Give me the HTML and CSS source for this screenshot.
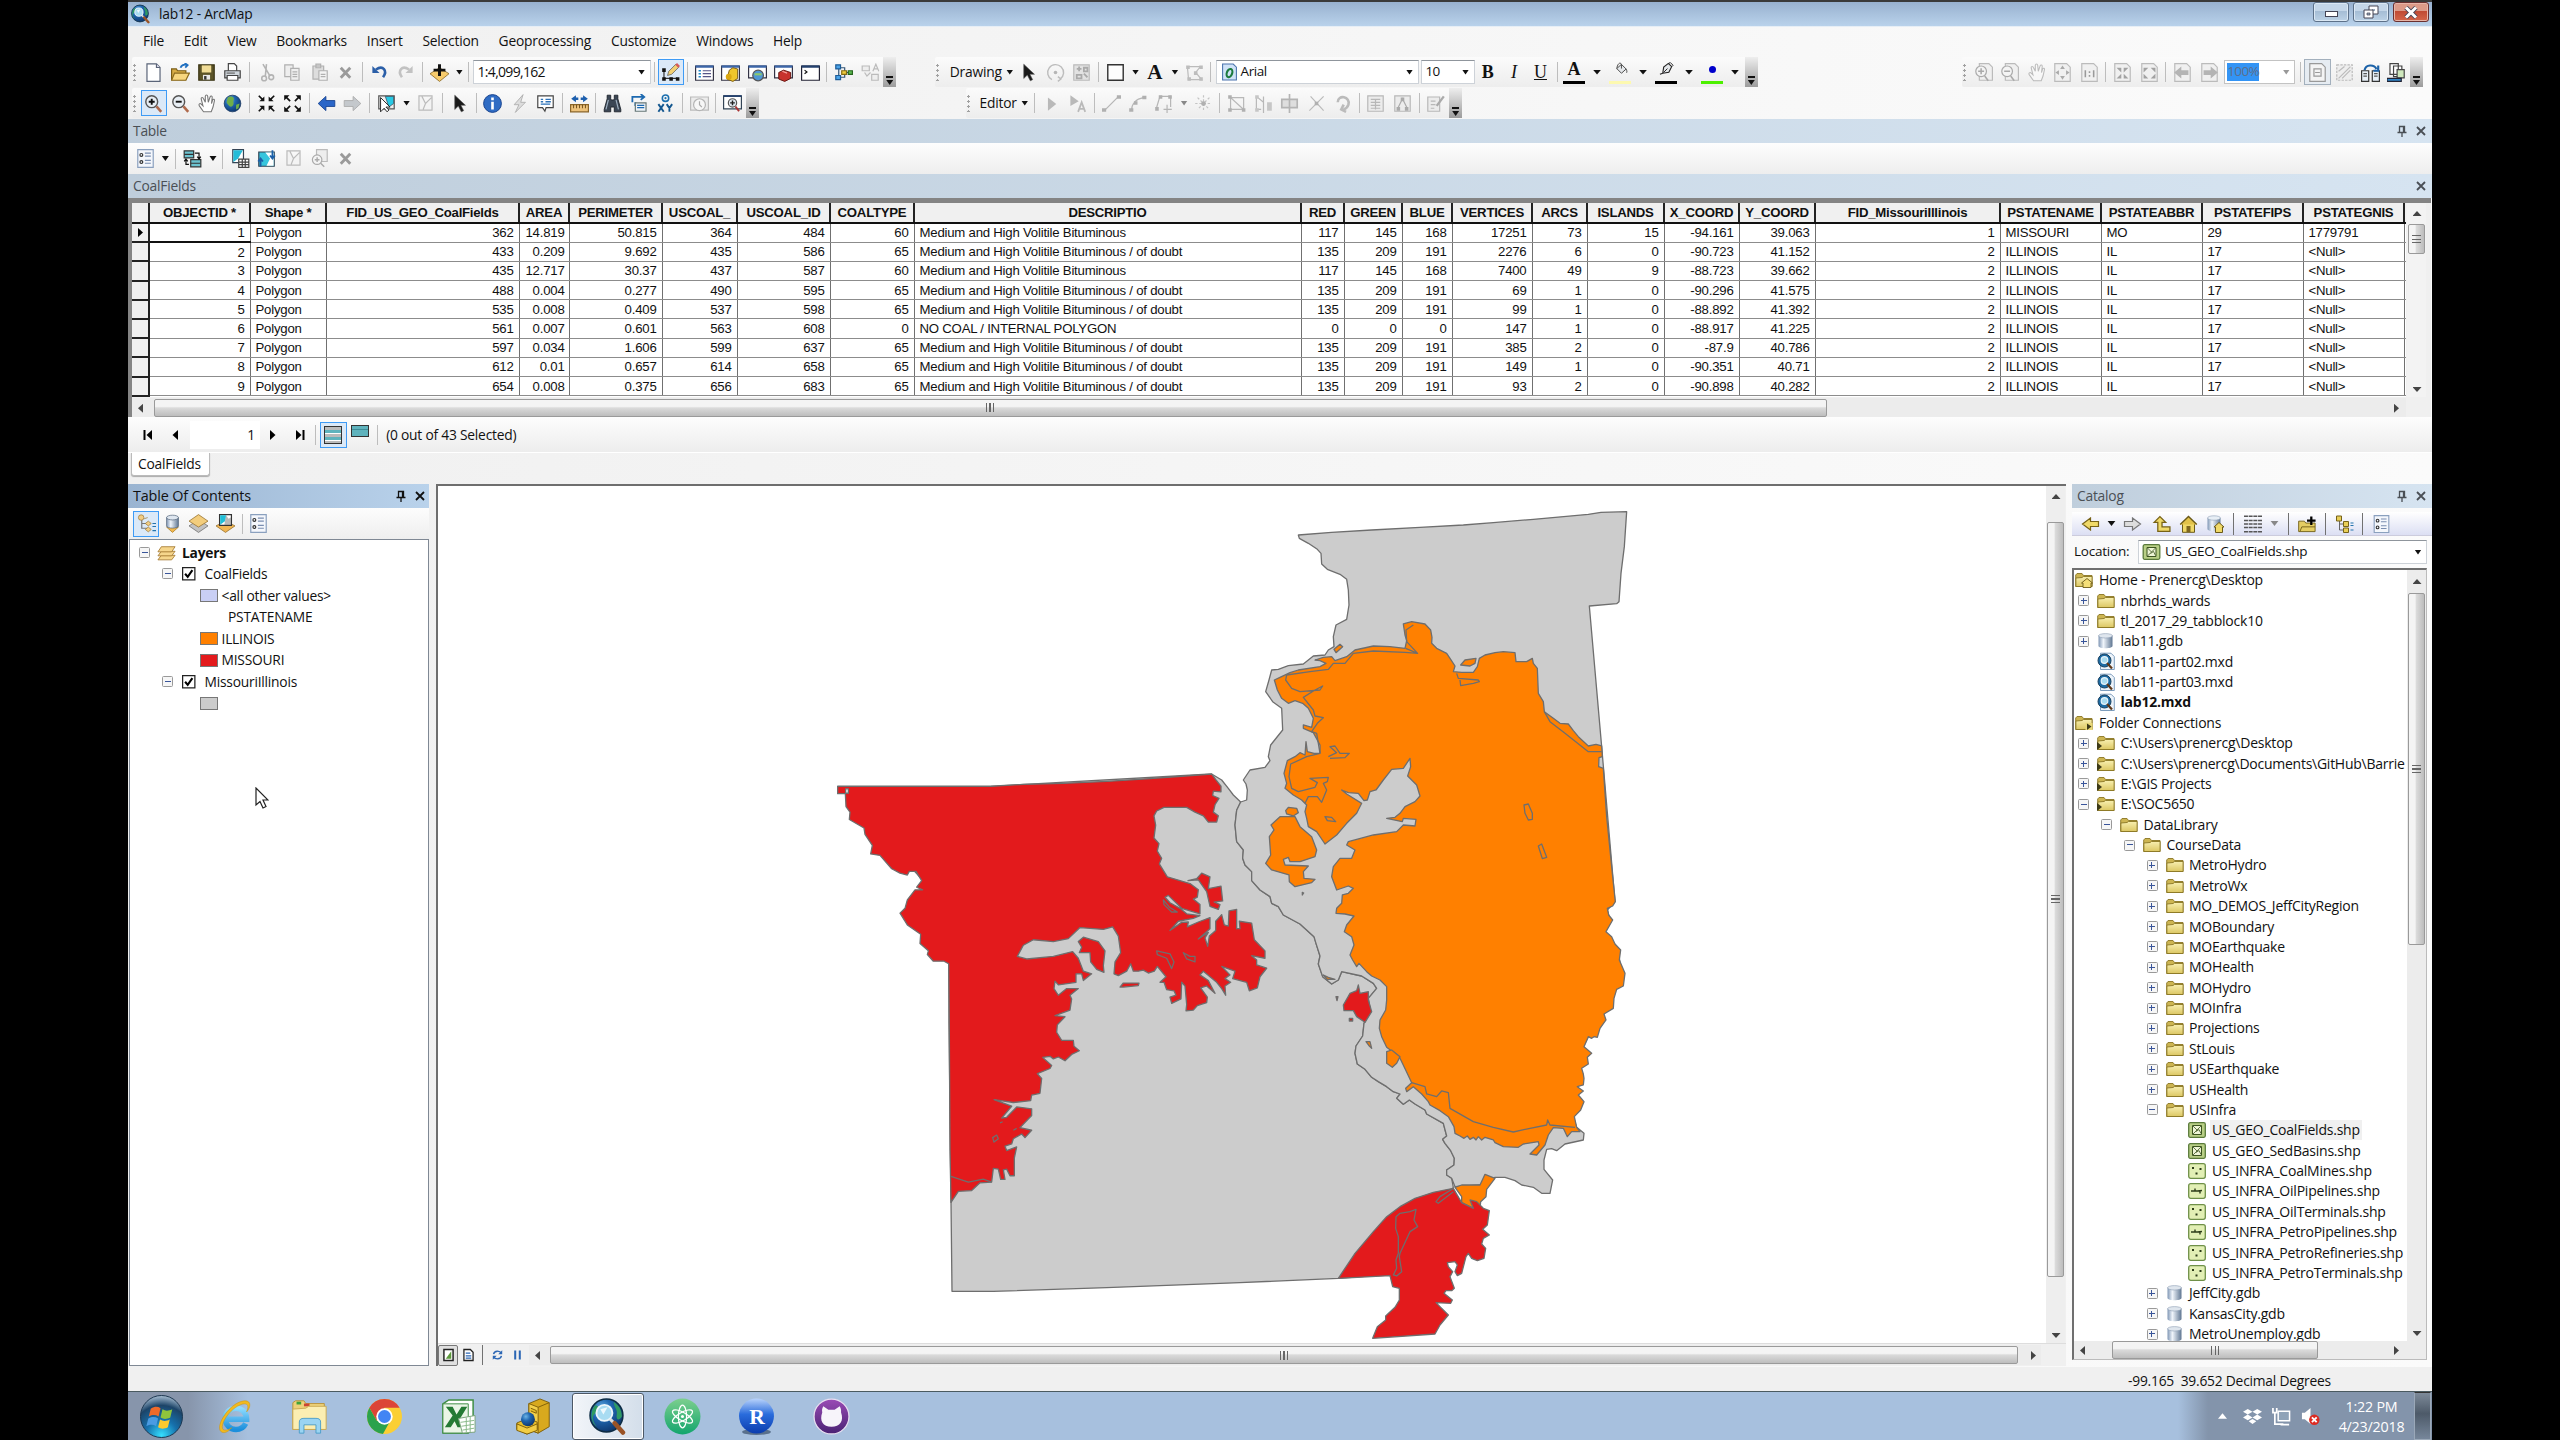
FILE: index.html
```html
<!DOCTYPE html>
<html lang="en">
<head>
<meta charset="utf-8">
<title>lab12 - ArcMap</title>
<link rel="stylesheet" href="styles.css">
</head>
<body>
<svg class="defs" width="0" height="0" aria-hidden="true">
<defs>
<linearGradient id="gFold" x1="0" y1="0" x2="0" y2="1"><stop offset="0" stop-color="#f8efb0"/><stop offset="1" stop-color="#dcc763"/></linearGradient>
<linearGradient id="gCyl" x1="0" y1="0" x2="1" y2="0"><stop offset="0" stop-color="#7f96b4"/><stop offset=".35" stop-color="#f0f5fb"/><stop offset="1" stop-color="#5f7692"/></linearGradient>
<radialGradient id="gGlobe" cx=".35" cy=".3" r=".8"><stop offset="0" stop-color="#6db4e6"/><stop offset=".4" stop-color="#1f66b0"/><stop offset="1" stop-color="#0c2f62"/></radialGradient>
<radialGradient id="gStart" cx=".5" cy=".95" r=".95"><stop offset="0" stop-color="#35e0ff"/><stop offset=".4" stop-color="#1670ac"/><stop offset=".75" stop-color="#1c4468"/><stop offset="1" stop-color="#a8bed2"/></radialGradient>
<linearGradient id="gAtom" x1="0" y1="0" x2="0" y2="1"><stop offset="0" stop-color="#7ccf8e"/><stop offset="1" stop-color="#12a56d"/></linearGradient>
<linearGradient id="gR" x1="0" y1="0" x2="0" y2="1"><stop offset="0" stop-color="#b9d3fb"/><stop offset=".45" stop-color="#2a6cdc"/><stop offset="1" stop-color="#0b3cae"/></linearGradient>
<linearGradient id="gCat" x1="0" y1="0" x2="0" y2="1"><stop offset="0" stop-color="#9a4bb5"/><stop offset="1" stop-color="#4a2274"/></linearGradient>
<linearGradient id="gIE" x1="0" y1="0" x2="0" y2="1"><stop offset="0" stop-color="#8edcff"/><stop offset="1" stop-color="#1c8fdc"/></linearGradient>
</defs>
<symbol id="new" viewBox="0 0 16 16"><path d="M2.500.8h8l3 3v11.700h-11z" fill="#fff" stroke="#5a6478"/><path d="M10.500.8v3h3" fill="#dde" stroke="#5a6478"/></symbol>
<symbol id="open" viewBox="0 0 16 16"><path d="M.5 14V5h4l1 1.500h7V14z" fill="#d8ad45" stroke="#7a5c14"/><path d="M.5 14.500L3 8.500h12.500L12.500 14.500z" fill="#f7d67e" stroke="#8a6a1c"/><path d="M8 4c1-2.500 3-3 5-2.500M11.500 0l2.500 1.800-2 2" stroke="#1f6fc0" stroke-width="1.500" fill="none"/></symbol>
<symbol id="save" viewBox="0 0 16 16"><path d="M1.500 1.500h13v13h-13z" fill="#5b5327" stroke="#3a3414"/><path d="M4 2h8v6H4z" fill="#f0dc96"/><path d="M5 10h6v4H5z" fill="#e8e8e8"/><path d="M6 11h2v3H6z" fill="#333"/></symbol>
<symbol id="print" viewBox="0 0 16 16"><path d="M4.500 7V.5h5l2 2V7" fill="#fff" stroke="#444"/><path d="M1.500 6.500h13v6h-13z" fill="#cfd6dc" stroke="#444"/><path d="M3.500 10.500h9v4h-9z" fill="#fff" stroke="#444"/><path d="M3 8.500h7" stroke="#666"/></symbol>
<symbol id="cut" viewBox="0 0 16 16"><g fill="none" stroke="#b3b3b3" stroke-width="1.300"><path d="M5 1l6 10M8 1l-1 10"/><circle cx="6" cy="13" r="2"/><circle cx="12" cy="12" r="2"/></g></symbol>
<symbol id="copy" viewBox="0 0 16 16"><g fill="#eee" stroke="#b0b0b0"><path d="M1.500 1.500h7v10h-7z"/><path d="M6.500 4.500h7v10h-7z"/><path d="M8 7.500h4M8 9.500h4M8 11.500h4"/></g></symbol>
<symbol id="paste" viewBox="0 0 16 16"><g fill="#ddd" stroke="#b0b0b0"><path d="M2.500 2.500h9v11h-9zM5 1h4v3H5z"/><path d="M7.500 6.500h7v8h-7z" fill="#f4f4f4"/><path d="M9 9.500h4M9 11.500h4"/></g></symbol>
<symbol id="xx" viewBox="0 0 16 16"><path d="M4 4l8 8.500M12 4l-8 8.500" stroke="#9a9a9a" stroke-width="2.400"/></symbol>
<symbol id="undo" viewBox="0 0 16 16"><path d="M5 5.500c6-4 10 1 6 6.500" fill="none" stroke="#2b5fa8" stroke-width="2.200"/><path d="M2 2.500v6h6z" fill="#2b5fa8"/></symbol>
<symbol id="redo" viewBox="0 0 16 16"><path d="M11 5.500c-6-4-10 1-6 6.500" fill="none" stroke="#c2c2c2" stroke-width="2.200"/><path d="M14 2.500v6H8z" fill="#c2c2c2"/></symbol>
<symbol id="add" viewBox="0 0 16 16"><path d="M0 9l8-5 8 5-8 6.500z" fill="#f6cb6c" stroke="#8a6a2c" stroke-width=".7"/><path d="M8 1v10M3 6h10" stroke="#111" stroke-width="2.500"/></symbol>
<symbol id="edtool" viewBox="0 0 16 16"><path d="M2.500 6v7h11" fill="none" stroke="#333" stroke-width="1"/><g fill="#111"><path d="M1 4.500h3v3H1zM1 12h3v3H1zM7 12h3v3H7zM12.500 12h3v3h-3z"/></g><path d="M5.500 10.500l1-3.500 6-6 2.500 2.500-6 6z" fill="#f2cf72" stroke="#555" stroke-width=".6"/><path d="M12 1.500l1.500-1.500 2.500 2.500-1.500 1.500z" fill="#d65b5b"/></symbol>
<symbol id="wToc" viewBox="0 0 16 16"><path d="M.5 2.500h15v12H.5z" fill="#fff" stroke="#334"/><path d="M.5 2h15v2H.5z" fill="#3c66a8"/><path d="M3 6.500h2M3 9h2M3 11.500h2" stroke="#1f86c8" stroke-width="1.300"/><path d="M6.500 6.500h7M6.500 9h7M6.500 11.500h7" stroke="#558"/></symbol>
<symbol id="wCat" viewBox="0 0 16 16"><path d="M.5 2.500h15v12H.5z" fill="#fff" stroke="#334"/><path d="M.5 2h15v2H.5z" fill="#3c66a8"/><path d="M7 6l3-2 4 1v8l-4 2.500-5-2z" fill="#f0c62c" stroke="#7a5c14" stroke-width=".8"/><circle cx="6.500" cy="11.500" r="2.500" fill="#dba711"/></symbol>
<symbol id="wSea" viewBox="0 0 16 16"><path d="M.5 2.500h15v10H.5z" fill="#fff" stroke="#334"/><path d="M.5 2h15v2H.5z" fill="#3c66a8"/><circle cx="8.500" cy="10.500" r="4.500" fill="#4f97d4" stroke="#555"/><path d="M5.500 9.500h6" stroke="#8cc96b" stroke-width="1.800"/></symbol>
<symbol id="wBox" viewBox="0 0 16 16"><path d="M.5 2.500h15v10H.5z" fill="#fff" stroke="#334"/><path d="M.5 2h15v2H.5z" fill="#3c66a8"/><path d="M4 8l4-2 6 2v5l-5 2.500-5-2z" fill="#c8322c" stroke="#64140f" stroke-width=".8"/><path d="M7 7l4 1.500" stroke="#f6a19c"/></symbol>
<symbol id="wPy" viewBox="0 0 16 16"><path d="M.5 2.500h15v12H.5z" fill="#fff" stroke="#223"/><path d="M.5 2h15v2H.5z" fill="#24416e"/><path d="M3 6l2 1.500-2 1.500" stroke="#111" fill="none"/></symbol>
<symbol id="mb" viewBox="0 0 16 16"><path d="M4 4v8M4 4h5v4M4 12h5V8h5" stroke="#357" fill="none"/><path d="M1.500 1.500h4v3.500h-4zM1.500 10.500h4v3.500h-4z" fill="#4aa3e8" stroke="#1d5b96"/><path d="M6.500 6.500h4v3h-4z" fill="#f2cd3f" stroke="#846b10"/><path d="M12 6.500h3.500v3H12z" fill="#5bb94f" stroke="#27651e"/></symbol>
<symbol id="mbg" viewBox="0 0 16 16"><g fill="#eee" stroke="#bbb"><path d="M1 2.500h6v4H1zM9 9.500h5.500v5H9zM3 8l2 3 3-3"/></g><path d="M10 7l2.500-6L15 7M11 5h3" stroke="#bbb" fill="none"/></symbol>
<symbol id="zin" viewBox="0 0 16 16"><circle cx="6.500" cy="6.500" r="5" fill="#e8eef4" stroke="#555" stroke-width="1.200"/><path d="M6.500 4v5M4 6.500h5" stroke="#111" stroke-width="1.600"/><path d="M10.500 10.500l4 4.500" stroke="#b06a4c" stroke-width="2.200"/></symbol>
<symbol id="zout" viewBox="0 0 16 16"><circle cx="6.500" cy="6.500" r="5" fill="#e8eef4" stroke="#555" stroke-width="1.200"/><path d="M4 6.500h5" stroke="#111" stroke-width="1.600"/><path d="M10.500 10.500l4 4.500" stroke="#b06a4c" stroke-width="2.200"/></symbol>
<symbol id="hand" viewBox="0 0 16 16"><path d="M5.500 15L2 10c-1-1.500.5-2.500 1.500-1.500L5 10 3.500 4c0-1.500 1.500-1.500 2 0L7 7V2c.2-1.500 1.800-1.500 2 0l.5 5L11 2.500c.5-1.200 2-1 1.800.5L12.200 8l1-3c.5-1 1.800-.5 1.500.5L13.500 11 12 15z" fill="#fff" stroke="#777" stroke-width=".9"/></symbol>
<symbol id="globe" viewBox="0 0 16 16"><circle cx="8" cy="8" r="7" fill="url(#gGlobe)" stroke="#1d3c66" stroke-width=".7"/><path d="M4 3c3-2 6 0 5 2s1 3-1 5-4-1-5-3zM11 9l3-1-1 4-2 1z" fill="#6fae4a"/></symbol>
<symbol id="fin" viewBox="0 0 16 16"><g fill="#111" stroke="#111" stroke-width="1.400"><path d="M1.500 1.500L5 5M14.500 1.500L11 5M1.500 14.500L5 11M14.500 14.500L11 11"/><path d="M6.200 2v4.200H2zM9.800 2v4.200H14zM6.200 14V9.800H2zM9.800 14V9.800H14z" stroke="none"/></g></symbol>
<symbol id="fout" viewBox="0 0 16 16"><g fill="#111" stroke="#111" stroke-width="1.400"><path d="M2 2l4 4M14 2l-4 4M2 14l4-4M14 14l-4-4"/><path d="M1 1h4.500L1 5.500zM15 1h-4.500L15 5.500zM1 15h4.500L1 10.500zM15 15h-4.500L15 10.500z" stroke="none"/></g></symbol>
<symbol id="back" viewBox="0 0 16 16"><path d="M1 8l6.500-6v3.500H15v5H7.500V14z" fill="#2a66c8" stroke="#123f8c" stroke-width=".7"/></symbol>
<symbol id="fwd" viewBox="0 0 16 16"><path d="M15 8L8.500 2v3.500H1v5h7.500V14z" fill="#c4c8cc" stroke="#a8a8a8" stroke-width=".7"/></symbol>
<symbol id="sel" viewBox="0 0 16 16"><path d="M1.500 1.500h13v11h-13z" fill="#eee" stroke="#555"/><path d="M7 2h7v6l-4 3z" fill="#27c9e4" stroke="#345" stroke-width=".6"/><path d="M3 3v12l3-3 2.500 3 1.500-1.500L7.500 11H11z" fill="#fff" stroke="#222" stroke-width=".8"/></symbol>
<symbol id="clr" viewBox="0 0 16 16"><path d="M2.500 1.500h11v12h-11zM5 2l3 6 5-5M8 8l-2 5" fill="#f3f3f3" stroke="#bbb"/></symbol>
<symbol id="arr" viewBox="0 0 16 16"><path d="M4 1v12l3-2.800L9.500 15l2-1-2.300-4.500H13z" fill="#1a1a1a" stroke="#555" stroke-width=".5"/></symbol>
<symbol id="info" viewBox="0 0 16 16"><circle cx="8" cy="8" r="7.500" fill="#2f6cc4" stroke="#15408c" stroke-width=".8"/><path d="M8 3v2.200M8 6.500V13" stroke="#fff" stroke-width="2.200"/></symbol>
<symbol id="bolt" viewBox="0 0 16 16"><path d="M11 .5L3.500 9h4l-3 6.500L13 7H9z" fill="#ddd" stroke="#aaa" stroke-width=".7"/></symbol>
<symbol id="html" viewBox="0 0 16 16"><path d="M1.500 1.500h13v10h-6l-1 3-2-3h-4z" fill="#fff" stroke="#444"/><path d="M4 4.500h2M8 4.500h4.500M4 6.500h2M8 6.500h4.500M4 8.500h8" stroke="#2d72b8" stroke-width="1.200"/></symbol>
<symbol id="meas" viewBox="0 0 16 16"><path d="M.5 9h15v6H.5z" fill="#edc27b" stroke="#8a6528"/><path d="M3 9v3M5.500 9v3M8 9v3M10.500 9v3M13 9v3" stroke="#6e4d18" stroke-width=".8"/><path d="M1 4l4-3v2h2v2H5v2zM15 4l-4-3v2H9v2h2v2z" fill="#1d5fae"/></symbol>
<symbol id="bino" viewBox="0 0 16 16"><path d="M3.500 1h3v3l.5 1h2l.5-1V1h3v3L15 13v2H9.500v-4h-3v4H1v-2L3.500 4z" fill="#3b4654" stroke="#161c24" stroke-width=".7"/><path d="M4.500 5l-2 8M11 5l2 8" stroke="#9fb0c0"/></symbol>
<symbol id="route" viewBox="0 0 16 16"><path d="M2 7V2.500h9M9 0l3 2.500L9 5M4.500 10V7" fill="none" stroke="#1d69b0" stroke-width="1.500"/><path d="M4.500 7.500h9v7h-9z" fill="#eef3f8" stroke="#677"/><path d="M6 9.500h6M6 11.500h6" stroke="#1d69b0"/></symbol>
<symbol id="xy" viewBox="0 0 16 16"><circle cx="8" cy="3.500" r="2.700" fill="none" stroke="#1b6fae" stroke-width="1.300"/><circle cx="8" cy="3.500" r=".9" fill="#1b6fae"/><path d="M2 8.500l4.500 6.500M6.500 8.500L2 15M9 8.500l2.300 3.300L13.600 8.500M11.300 11.500V15" stroke="#14578f" stroke-width="1.600" fill="none"/></symbol>
<symbol id="time" viewBox="0 0 16 16"><path d="M.5 2.500h15v11H.5z" fill="#ececec" stroke="#bbb"/><circle cx="8" cy="9" r="5" fill="#f7f7f7" stroke="#b4b4b4"/><path d="M8 6v3l2 2" stroke="#aaa" fill="none"/></symbol>
<symbol id="view" viewBox="0 0 16 16"><path d="M.5 1.500h15v11H.5z" fill="#fff" stroke="#345"/><path d="M.5 1h15v1.500H.5z" fill="#24416e"/><circle cx="8" cy="7.500" r="3.500" fill="#dfe8f0" stroke="#555"/><path d="M8 5.500v4M6 7.500h4" stroke="#222" stroke-width="1.200"/><path d="M10.500 10.500l3 4" stroke="#a33" stroke-width="1.600"/></symbol>
<symbol id="rot" viewBox="0 0 16 16"><path d="M5 14A6.700 6.700 0 1 1 12 13.500M10 11.500l2.500 2-2.500 2" fill="none" stroke="#bcbcbc" stroke-width="1.200"/><circle cx="8" cy="8" r="1.500" fill="#b5b5b5"/></symbol>
<symbol id="gz" viewBox="0 0 16 16"><path d="M1.500 1.500h13v13h-13z" fill="#e2e2e2" stroke="#bbb"/><path d="M4 5h4M6 3v4M10 4h3v3h-3zM10 9l3 3M4 10h4v3H4z" stroke="#aaa" fill="none" stroke-width="1.500"/></symbol>
<symbol id="rect" viewBox="0 0 16 16"><path d="M1.500 1.500h13v13h-13z" fill="#fdfdfd" stroke="#333" stroke-width="1.200"/></symbol>
<symbol id="ev" viewBox="0 0 16 16"><path d="M2 3h11l-4 5 5 6H3z" fill="none" stroke="#bbb"/><path d="M1 2h3v3H1zM12 2h3v3h-3zM7.500 7h3v3h-3zM12 12h3v3h-3zM2 12h3v3H2z" fill="#bdbdbd"/></symbol>
<symbol id="truetype" viewBox="0 0 16 16"><path d="M1.500.5h10l3 3v12h-13z" fill="#cfe2f7" stroke="#4a73ad"/><ellipse cx="8" cy="9" rx="2.500" ry="4" transform="rotate(20 8 9)" fill="none" stroke="#1c7a3e" stroke-width="2"/></symbol>
<symbol id="fill" viewBox="0 0 16 16"><path d="M4 7l5-4.500 5 5L9 12z" fill="#e4e7ea" stroke="#444"/><path d="M4 7c1-6 4-7 5-4.500V7M14 7.500c1 2 1 3 .5 4" fill="none" stroke="#444"/></symbol>
<symbol id="pen" viewBox="0 0 16 16"><path d="M1 13l3-1 6.500-1 3-6L10 1.500l-5 4L4 12" fill="#e4e7ea" stroke="#222" stroke-width="1.200"/><path d="M5 11l4-4M10.500 1.500l1.500-1 3 3-1.500 1.500" stroke="#222" fill="none"/></symbol>
<symbol id="e1" viewBox="0 0 16 16"><path d="M5 3v11l7-5.500z" fill="#b9b9b9"/></symbol>
<symbol id="e2" viewBox="0 0 16 16"><path d="M2 1v9l7-4z" fill="#b9b9b9"/><path d="M8.500 15L11.500 7l3 8M9.500 12.500h4" stroke="#b9b9b9" fill="none" stroke-width="1.500"/></symbol>
<symbol id="e3" viewBox="0 0 16 16"><path d="M2 14L14 2" stroke="#b5b5b5"/><path d="M0 12h3.500v3H0zM12.500 1H16v3h-3.500z" fill="#b0b0b0"/></symbol>
<symbol id="e4" viewBox="0 0 16 16"><path d="M3 14c0-6 4-10 10-11" stroke="#b5b5b5" fill="none"/><path d="M1 12h3.500v3H1zM5 6h3v3H5zM12 1.500h3.500v3H12z" fill="#b0b0b0"/></symbol>
<symbol id="e5" viewBox="0 0 16 16"><path d="M2 12L5 2h9v9M8 13h7M11 9v7" stroke="#b5b5b5" fill="none"/><path d="M1 11h3v3H1zM4 1h3v3H4zM12 1h3v3h-3z" fill="#b0b0b0"/></symbol>
<symbol id="e6" viewBox="0 0 16 16"><path d="M8 1v14M1 8h14M3 3l10 10M13 3L3 13" stroke="#c4c4c4" stroke-dasharray="2 1.500"/><circle cx="8" cy="8" r="2" fill="#b0b0b0"/></symbol>
<symbol id="e7" viewBox="0 0 16 16"><path d="M3 13V3l11 10zM3 3h11v10" stroke="#b8b8b8" fill="none"/><path d="M1 1h3v3H1zM1 12h3v3H1zM12.500 12h3v3h-3z" fill="#b0b0b0"/></symbol>
<symbol id="e8" viewBox="0 0 16 16"><path d="M8 2v14M2 2l6 5M2 2v11h4" stroke="#b8b8b8" fill="none"/><path d="M1 1h3v3H1zM1 12h3v3H1zM11 7h4v7h-4z" fill="#c6c6c6"/></symbol>
<symbol id="e9" viewBox="0 0 16 16"><path d="M1.500 4.500h13v7h-13zM8 0v16" stroke="#b4b4b4" fill="#dedede" stroke-width="1.400"/></symbol>
<symbol id="e10" viewBox="0 0 16 16"><path d="M2 14L14 2M3 2l11 12" stroke="#bababa"/><path d="M6.500 6.500h3v3h-3z" fill="#b0b0b0"/></symbol>
<symbol id="e11" viewBox="0 0 16 16"><path d="M4 7c0-7 11-5 9 2-1 3-4 4-4 4M11 15l-4-2 2-4" stroke="#bbb" fill="none" stroke-width="2.200"/></symbol>
<symbol id="e12" viewBox="0 0 16 16"><path d="M1.500 1.500h13v13h-13zM4 4.500h8M4 7h8M4 9.500h8M4 12h8M8 4v9" stroke="#b8b8b8" fill="#ececec"/></symbol>
<symbol id="e13" viewBox="0 0 16 16"><path d="M1.500 1.500h13v13h-13z" stroke="#b8b8b8" fill="#ececec"/><path d="M4 12l4-8 4 8" stroke="#aaa" fill="none"/><path d="M3 11h3v3H3zM10 11h3v3h-3zM6.500 3h3v3h-3z" fill="#aaa"/></symbol>
<symbol id="e14" viewBox="0 0 16 16"><path d="M1.500 2.500h10v12h-10zM4 6h4M4 9h4M4 12h3" stroke="#b8b8b8" fill="#ececec"/><path d="M9 10l6-8" stroke="#aaa" stroke-width="2"/></symbol>
<symbol id="pgz" viewBox="0 0 16 16"><path d="M4.500.5h8l3 3v11h-11z" fill="#f0f0f0" stroke="#bbb"/><circle cx="6" cy="7" r="4.500" fill="#f4f4f4" stroke="#aaa"/><path d="M6 4.500v5M3.500 7h5M9 11l3 4" stroke="#aaa" stroke-width="1.300"/></symbol>
<symbol id="pgo" viewBox="0 0 16 16"><path d="M4.500.5h8l3 3v11h-11z" fill="#f0f0f0" stroke="#bbb"/><circle cx="6" cy="7" r="4.500" fill="#f4f4f4" stroke="#aaa"/><path d="M3.500 7h5M9 11l3 4" stroke="#aaa" stroke-width="1.300"/></symbol>
<symbol id="pg4" viewBox="0 0 16 16"><path d="M1.500.5h10l3 3v12h-13z" fill="#f0f0f0" stroke="#bbb"/><path d="M8 2l2 3H6zM8 14l2-3H6zM2 8l3-2v4zM14 8l-3-2v4z" fill="#aaa"/></symbol>
<symbol id="pg1" viewBox="0 0 16 16"><path d="M1.500.5h10l3 3v12h-13z" fill="#f0f0f0" stroke="#bbb"/><path d="M4.500 6v6M11.500 6v6M8 7v1.500M8 10v1.500" stroke="#999" stroke-width="1.300"/></symbol>
<symbol id="pgi" viewBox="0 0 16 16"><path d="M1.500.5h10l3 3v12h-13z" fill="#f0f0f0" stroke="#bbb"/><path d="M3 4h4v4zM13 4H9v4zM3 13h4V9zM13 13H9V9z" fill="#a2a2a2"/></symbol>
<symbol id="pgu" viewBox="0 0 16 16"><path d="M1.500.5h10l3 3v12h-13z" fill="#f0f0f0" stroke="#bbb"/><path d="M3 4v4l4-4zM13 4v4L9 4zM3 13V9l4 4zM13 13V9l-4 4z" fill="#a2a2a2"/></symbol>
<symbol id="pgl" viewBox="0 0 16 16"><path d="M1.500.5h10l3 3v12h-13z" fill="#f0f0f0" stroke="#bbb"/><path d="M1 8l6-5v3h6v4H7v3z" fill="#b4b4b4"/></symbol>
<symbol id="pgr" viewBox="0 0 16 16"><path d="M1.500.5h10l3 3v12h-13z" fill="#f0f0f0" stroke="#bbb"/><path d="M15 8L9 3v3H3v4h6v3z" fill="#b4b4b4"/></symbol>
<symbol id="pgd" viewBox="0 0 16 16"><path d="M1.500.5h10l3 3v12h-13z" fill="#f4f4f4" stroke="#999"/><path d="M5 5h6v6H5zM6 8h4" stroke="#999" fill="none"/></symbol>
<symbol id="pgx" viewBox="0 0 16 16"><path d="M1.500 1.500h13v13h-13z" fill="#eee" stroke="#bbb" stroke-dasharray="2 1"/><path d="M3 13L13 3M3 7l5-4M6 13l7-7" stroke="#bbb"/></symbol>
<symbol id="ddp" viewBox="0 0 16 16"><path d="M.5 6.500h6v9h-6zM9.500 6.500h6v9h-6z" fill="#e7f0f8" stroke="#333"/><path d="M3 6c1-5 8-5 10-1M14.500 2v4.500h-4" fill="none" stroke="#1c62a8" stroke-width="1.800"/><path d="M2 9h3M2 11h3M11 9h3M11 11h3" stroke="#555"/></symbol>
<symbol id="ddq" viewBox="0 0 16 16"><path d="M2.500.5h7v9h-7zM5.500 2.500h7v9h-7z" fill="#fff" stroke="#444"/><path d="M8.500 5.500h6v7h-6z" fill="#cfe8bd" stroke="#444"/><path d="M0 13h12v2.500H0z" fill="#2f86c8" stroke="#223"/></symbol>
<symbol id="opt" viewBox="0 0 16 16"><path d="M1.500.5h13v15h-13z" fill="#f4f7fc" stroke="#8aa0be"/><circle cx="4.500" cy="5" r="1.200" fill="none" stroke="#333"/><circle cx="4.500" cy="11" r="1.200" fill="none" stroke="#333"/><path d="M7.500 3.500h5M7.500 6h5M7.500 9.500h5M7.500 12h5" stroke="#7a8eb0"/></symbol>
<symbol id="rel" viewBox="0 0 16 16"><path d="M1 1.500h8v6H1zM6.500 9h8.500v6H6.500z" fill="#6cc3d0" stroke="#333"/><path d="M1 4.500h8M6.500 12h8" stroke="#333"/><path d="M10 3.500h3.500V8M5 13H2.500V9M12 6.500l1.500 2 1.500-2M1 10.500L2.500 8.500 4 10.500" fill="none" stroke="#111"/></symbol>
<symbol id="tsel" viewBox="0 0 16 16"><path d="M1.500.5h9v11h-9z" fill="#fff" stroke="#345"/><path d="M2 1h8L6 8l-4 3z" fill="#25bcd8"/><path d="M6.500 8.500h8.500v7H6.500zM6.500 11h8.500M6.500 13.200h8.500M9.500 8.500v7M12 8.500v7" fill="#fff" stroke="#444"/></symbol>
<symbol id="tsw" viewBox="0 0 16 16"><path d="M1.500 2.500h13v12h-13z" fill="#37c5dd" stroke="#345"/><path d="M7 3l4 5-3 6h6V3z" fill="#fff"/><path d="M3 15V8M1 10.500L3 8l2 2.500M13 1v7M11 5.500L13 8l2-2.500" fill="none" stroke="#1c5fa8" stroke-width="1.500"/></symbol>
<symbol id="tz" viewBox="0 0 16 16"><path d="M5.500.5h9v10h-9z" fill="#eee" stroke="#bbb"/><circle cx="6" cy="9" r="4" fill="#f4f4f4" stroke="#aaa"/><path d="M6 7v4M4 9h4M9 12l3 3" stroke="#aaa" stroke-width="1.200"/></symbol>
<symbol id="pin" viewBox="0 0 12 12"><path d="M3.500 7V1.500h5V7M7.500 1.500V7M1.500 7.500h9M6 8v4" fill="none" stroke="currentColor" stroke-width="1.300"/></symbol>
<symbol id="cls" viewBox="0 0 12 12"><path d="M2 2l8 8M10 2l-8 8" stroke="currentColor" stroke-width="1.800"/></symbol>
<symbol id="t1" viewBox="0 0 16 16"><path d="M4 5v7h5M4 8h5" stroke="#777" fill="none"/><circle cx="3.500" cy="3" r="2.300" fill="#f2cd84" stroke="#9b7634" stroke-width=".6"/><path d="M6 4l3-1M7 8l2.500-2 2.500 2-2.500 2zM7 13l2.500-2 2.500 2-2.500 2z" fill="#f2cd84" stroke="#9b7634" stroke-width=".6"/><path d="M13 8h3M13 10.500h3M13 14h3" stroke="#2374ae"/></symbol>
<symbol id="t2" viewBox="0 0 16 16"><path d="M3 11h10l-5 4.500z" fill="#f2b84e" stroke="#a8791f" stroke-width=".6"/><path d="M3 3v7c0 2.500 10 2.500 10 0V3z" fill="url(#gCyl)" stroke="#56677c" stroke-width=".6"/><ellipse cx="8" cy="3" rx="5" ry="2" fill="#dfe7f0" stroke="#56677c" stroke-width=".6"/></symbol>
<symbol id="t3" viewBox="0 0 16 16"><path d="M0 10l8-5 8 5-8 5.500z" fill="#c2c2c2" stroke="#777" stroke-width=".7"/><path d="M0 6l8-5.500L16 6l-8 5z" fill="#f3cd7c" stroke="#9b7634" stroke-width=".7"/></symbol>
<symbol id="t4" viewBox="0 0 16 16"><path d="M0 10l8-4 8 4-8 5.500z" fill="#f0b654" stroke="#9b7634" stroke-width=".7"/><path d="M3 .5h10v9H3z" fill="#fff" stroke="#333"/><path d="M3.500 1h5l-1 5-4 3z" fill="#1fbfd8"/><path d="M8.500 1l2 3 2-1v6H7z" fill="#333" opacity=".35"/></symbol>
<symbol id="lyr" viewBox="0 0 16 14"><g fill="#f6d68c" stroke="#a07428" stroke-width=".7"><path d="M.5 13l3-4h12l-3 4z"/><path d="M.5 9.500l3-4h12l-3 4z"/><path d="M.5 6l3-4.500h12l-3 4.500z"/></g></symbol>
<symbol id="fold" viewBox="0 0 18 15"><path d="M.7 14V2.500L2 1h5l1.500 2H17v11z" fill="#cdb552" stroke="#8a7624" stroke-width=".9"/><path d="M.9 14V5.500L7 5l1.500-1h8.600v10z" fill="url(#gFold)" stroke="#8a7624" stroke-width=".9"/></symbol>
<symbol id="fcon" viewBox="0 0 18 15"><use href="#fold"/><path d="M0 6.500l5 4-5 4z" fill="#3d3a18"/></symbol>
<symbol id="fhome" viewBox="0 0 18 15"><use href="#fold"/><path d="M6.500 10.500L12 6l5.500 4.500H16V15H8v-4.500z" fill="#f5df78" stroke="#6b5a18" stroke-width=".9"/></symbol>
<symbol id="fconn" viewBox="0 0 18 15"><use href="#fold"/><path d="M10.500 7.500h7v7h-7z" fill="#e8d87a"/><path d="M12 8l4.500 3-4.500 3.500z" fill="#3d3a18"/></symbol>
<symbol id="gdb" viewBox="0 0 18 16"><path d="M1.500 2.500v10.500c0 3 14 3 14 0V2.500z" fill="url(#gCyl)"/><ellipse cx="8.500" cy="2.800" rx="7" ry="2.200" fill="#dfe6ee" stroke="#8ea0b5" stroke-width=".6"/></symbol>
<symbol id="mxd" viewBox="0 0 18 18"><path d="M3.500.7h10.500l3.300 3.300v13H3.500z" fill="#eef4fa" stroke="#7d9dbd"/><circle cx="7.500" cy="8" r="6.500" fill="#1c6aa3" stroke="#17405f"/><circle cx="7.500" cy="7.500" r="3.300" fill="#a9dcf0" stroke="#e8f4fa" stroke-width="1.200"/><path d="M10 10.500l5 5.500" stroke="#5f3a1c" stroke-width="2.200"/></symbol>
<symbol id="spoly" viewBox="0 0 18 16"><rect x=".7" y=".7" width="16.600" height="14.600" rx="1.500" fill="#b9cf86" stroke="#5a7a3a" stroke-width="1.300"/><path d="M4.500 3.500h9v9h-9z" fill="#eef5d6" stroke="#3c5420"/><path d="M5 4l4 4 4-4M9 8l-4 4M8 9.500l3-2 2 4" stroke="#3c5420" stroke-width=".8" fill="none"/></symbol>
<symbol id="spt" viewBox="0 0 18 16"><rect x=".7" y=".7" width="16.600" height="14.600" rx="2" fill="#e2efb4" stroke="#6f9048" stroke-width="1.300"/><path d="M4 4h2v2H4zM11.500 5h2v2h-2zM7.500 9.500h2v2h-2z" fill="#2c3c18"/></symbol>
<symbol id="sln" viewBox="0 0 18 16"><rect x=".7" y=".7" width="16.600" height="14.600" rx="2" fill="#e2efb4" stroke="#6f9048" stroke-width="1.300"/><path d="M3 8h6.500l4.500-.5M7 5.500V8M12 7.500v3" stroke="#2c3c18" stroke-width="1.400" fill="none"/></symbol>
<symbol id="cb" viewBox="0 0 18 14"><path d="M1 7l8-6v3.500h8v5H9V13z" fill="#f0d968" stroke="#776215" stroke-width="1.200"/></symbol>
<symbol id="cf" viewBox="0 0 18 14"><path d="M17 7L9 1v3.500H1v5h8V13z" fill="#ddd" stroke="#777" stroke-width="1.200"/></symbol>
<symbol id="cu" viewBox="0 0 18 16"><path d="M2 6.500L7.500 1 13 6.500H9.500v4.300H17V15H5.500V6.500z" fill="#f0d968" stroke="#776215" stroke-width="1.200"/></symbol>
<symbol id="ch" viewBox="0 0 18 18"><path d="M3 9v8.300h12V9" fill="#f0d968" stroke="#6b5a18"/><path d="M.7 9.500L9 1.500l8.300 8" fill="#e2c24a" stroke="#6b5a18" stroke-width="1.400"/><path d="M7 11h4v6H7z" fill="#7d651c"/></symbol>
<symbol id="cg" viewBox="0 0 18 18"><path d="M1 3v11c0 3 13 3 13 0V3z" fill="url(#gCyl)"/><ellipse cx="7.500" cy="3" rx="6.500" ry="2.200" fill="#e7eef5" stroke="#8ea0b5" stroke-width=".6"/><path d="M7.500 12L12.500 7.500 17.500 12H16v5.500H9V12z" fill="#f0d968" stroke="#6b5a18"/></symbol>
<symbol id="cgrid" viewBox="0 0 20 20"><path d="M0 1.500h20M0 6h20M0 10h20M0 14h20M0 18.500h20" stroke="#555" stroke-width="1.700" stroke-dasharray="4.400 .8"/></symbol>
<symbol id="cfc" viewBox="0 0 20 18"><path d="M.7 17V6h6l1.500 2H18v9z" fill="#e4cd63" stroke="#76631a"/><path d="M2 17l2-5h14" fill="none" stroke="#76631a"/><path d="M14 1v9M9.500 5.500h9" stroke="#000" stroke-width="2.400"/></symbol>
<symbol id="ctree" viewBox="0 0 18 18"><path d="M4 5v10h5M4 9h5" stroke="#666" fill="none"/><path d="M1 1h5v5H1zM8 6.500h5v5H8zM8 13h5v4.500H8z" fill="#e9cf58" stroke="#76631a"/><path d="M15 8h3M15 10.500h3M15 15h3" stroke="#2374ae" stroke-width="1.200"/></symbol>
<symbol id="arcmap" viewBox="0 0 36 36"><circle cx="17" cy="17" r="16" fill="url(#gGlobe)" stroke="#0d2c44" stroke-width="1.500"/><path d="M6 7c4 0 4 5 0 8s-2 9 2 13c-6-3-8-14-2-21zM24 4c5 3 8 8 8 14-3 5-6 3-5-2s-3-7-3-12z" fill="#2f9a63"/><circle cx="15" cy="14.500" r="7.800" fill="#a9dcf2" stroke="#eef6fa" stroke-width="1.800"/><path d="M11 11l7-2-4 7z" fill="#fff" opacity=".8"/><path d="M20.500 20.500l4 4" stroke="#ddd" stroke-width="3"/><path d="M25 24.500l8 9" stroke="#9a5326" stroke-width="4.500" stroke-linecap="round"/></symbol>
</svg>

<div class="app">
<header class="titlebar"><svg class="ticon"><use href="#arcmap"/></svg><span class="cap">lab12 - ArcMap</span>
<div class="wbtns"><span class="wb"><i class="mn"></i></span><span class="wb"><svg width="18" height="14" viewBox="0 0 18 14"><path d="M7 1h9v8H7z" fill="#fff" stroke="#445"/><path d="M10 4h3v2h-3z" fill="#9ab"/><path d="M2 5h9v8H2z" fill="#fff" stroke="#445"/><path d="M5 8h3v2H5z" fill="#9ab" stroke="#445" stroke-width=".7"/></svg></span><span class="wb red"><svg width="16" height="13" viewBox="0 0 16 13"><path d="M3 1.500l10 10M13 1.500l-10 10" stroke="#445" stroke-width="4.600"/><path d="M3 1.500l10 10M13 1.500l-10 10" stroke="#fff" stroke-width="3"/></svg></span></div></header>

<nav class="menu"><span>File</span><span>Edit</span><span>View</span><span>Bookmarks</span><span>Insert</span><span>Selection</span><span>Geoprocessing</span><span>Customize</span><span>Windows</span><span>Help</span></nav>

<div class="tbrow">
<div class="tb"><i class="grip"></i><b class="b"><svg><use href="#new"/></svg></b><b class="b"><svg><use href="#open"/></svg></b><b class="b"><svg><use href="#save"/></svg></b><b class="b"><svg><use href="#print"/></svg></b><i class="s"></i><b class="b"><svg><use href="#cut"/></svg></b><b class="b"><svg><use href="#copy"/></svg></b><b class="b"><svg><use href="#paste"/></svg></b><b class="b"><svg><use href="#xx"/></svg></b><i class="s"></i><b class="b"><svg><use href="#undo"/></svg></b><b class="b"><svg><use href="#redo"/></svg></b><i class="s"></i><b class="b"><svg><use href="#add"/></svg></b><i class="c"></i><i class="s"></i><div class="combo scale"><span>1:4,099,162</span><i class="c"></i></div><i class="s"></i><b class="b on"><svg><use href="#edtool"/></svg></b><i class="s"></i><b class="b"><svg><use href="#wToc"/></svg></b><b class="b"><svg><use href="#wCat"/></svg></b><b class="b"><svg><use href="#wSea"/></svg></b><b class="b"><svg><use href="#wBox"/></svg></b><b class="b"><svg><use href="#wPy"/></svg></b><i class="s"></i><b class="b"><svg><use href="#mb"/></svg></b><b class="b"><svg><use href="#mbg"/></svg></b><i class="ov"></i></div>
<div class="tb draw"><i class="grip"></i><span class="lbl">Drawing</span><i class="c"></i><b class="b"><svg><use href="#arr"/></svg></b><b class="b"><svg><use href="#rot"/></svg></b><b class="b"><svg><use href="#gz"/></svg></b><i class="s"></i><b class="b"><svg><use href="#rect"/></svg></b><i class="c"></i><b class="b"><span class="g big">A</span></b><i class="c"></i><b class="b"><svg><use href="#ev"/></svg></b><i class="s"></i><div class="combo font"><svg><use href="#truetype"/></svg><span>Arial</span><i class="c"></i></div><div class="combo size"><span>10</span><i class="c"></i></div><b class="b"><span class="g">B</span></b><b class="b"><span class="g it">I</span></b><b class="b"><span class="g un">U</span></b><i class="s"></i><b class="b u k"><span class="g">A</span></b><i class="c w"></i><b class="b u y"><svg><use href="#fill"/></svg></b><i class="c w"></i><b class="b u k"><svg><use href="#pen"/></svg></b><i class="c w"></i><b class="b u gr"><i class="dot"></i></b><i class="c w"></i><i class="ov"></i></div>
<div class="tb lay"><i class="grip"></i><b class="b"><svg><use href="#pgz"/></svg></b><b class="b"><svg><use href="#pgo"/></svg></b><b class="b dim"><svg><use href="#hand"/></svg></b><b class="b"><svg><use href="#pg4"/></svg></b><b class="b"><svg><use href="#pg1"/></svg></b><i class="s"></i><b class="b"><svg><use href="#pgi"/></svg></b><b class="b"><svg><use href="#pgu"/></svg></b><i class="s"></i><b class="b"><svg><use href="#pgl"/></svg></b><b class="b"><svg><use href="#pgr"/></svg></b><div class="combo pct"><span>100%</span><i class="c"></i></div><i class="s"></i><b class="b on2"><svg><use href="#pgd"/></svg></b><b class="b"><svg><use href="#pgx"/></svg></b><b class="b"><svg><use href="#ddp"/></svg></b><b class="b"><svg><use href="#ddq"/></svg></b><i class="ov"></i></div>
</div>
<div class="tbrow second">
<div class="tb"><i class="grip"></i><b class="b on"><svg><use href="#zin"/></svg></b><b class="b"><svg><use href="#zout"/></svg></b><b class="b"><svg><use href="#hand"/></svg></b><b class="b"><svg><use href="#globe"/></svg></b><i class="s"></i><b class="b"><svg><use href="#fin"/></svg></b><b class="b"><svg><use href="#fout"/></svg></b><i class="s"></i><b class="b"><svg><use href="#back"/></svg></b><b class="b"><svg><use href="#fwd"/></svg></b><i class="s"></i><b class="b"><svg><use href="#sel"/></svg></b><i class="c"></i><b class="b"><svg><use href="#clr"/></svg></b><i class="s"></i><b class="b"><svg><use href="#arr"/></svg></b><i class="s"></i><b class="b"><svg><use href="#info"/></svg></b><b class="b"><svg><use href="#bolt"/></svg></b><b class="b"><svg><use href="#html"/></svg></b><i class="s"></i><b class="b"><svg><use href="#meas"/></svg></b><i class="s"></i><b class="b"><svg><use href="#bino"/></svg></b><b class="b"><svg><use href="#route"/></svg></b><b class="b"><svg><use href="#xy"/></svg></b><i class="s"></i><b class="b"><svg><use href="#time"/></svg></b><i class="s"></i><b class="b"><svg><use href="#view"/></svg></b><i class="ov"></i></div>
<div class="tb edit"><i class="grip"></i><span class="lbl">Editor</span><i class="c"></i><i class="s"></i><b class="b"><svg><use href="#e1"/></svg></b><b class="b"><svg><use href="#e2"/></svg></b><i class="s"></i><b class="b"><svg><use href="#e3"/></svg></b><b class="b"><svg><use href="#e4"/></svg></b><b class="b"><svg><use href="#e5"/></svg></b><i class="c dm"></i><b class="b"><svg><use href="#e6"/></svg></b><i class="s"></i><b class="b"><svg><use href="#e7"/></svg></b><b class="b"><svg><use href="#e8"/></svg></b><b class="b"><svg><use href="#e9"/></svg></b><b class="b"><svg><use href="#e10"/></svg></b><b class="b"><svg><use href="#e11"/></svg></b><i class="s"></i><b class="b"><svg><use href="#e12"/></svg></b><b class="b"><svg><use href="#e13"/></svg></b><i class="s"></i><b class="b"><svg><use href="#e14"/></svg></b><i class="ov"></i></div>
</div>

<section class="tablepane">
<div class="ptitle dimt"><span>Table</span><svg><use href="#pin"/></svg><svg><use href="#cls"/></svg></div>
<div class="ttools"><b class="b"><svg><use href="#opt"/></svg></b><i class="c"></i><i class="s"></i><b class="b"><svg><use href="#rel"/></svg></b><i class="c"></i><i class="s"></i><b class="b"><svg><use href="#tsel"/></svg></b><b class="b"><svg><use href="#tsw"/></svg></b><b class="b"><svg><use href="#clr"/></svg></b><b class="b"><svg><use href="#tz"/></svg></b><b class="b"><svg><use href="#xx"/></svg></b></div>
<div class="ptitle dimt"><span>CoalFields</span><svg><use href="#cls"/></svg></div>
<div class="gridwrap">
<div class="gridcol">
<table class="grid">
<colgroup><col style="width:17px"><col style="width:101px"><col style="width:76px"><col style="width:193px"><col style="width:50px"><col style="width:93px"><col style="width:75px"><col style="width:93px"><col style="width:84px"><col style="width:387px"><col style="width:43px"><col style="width:58px"><col style="width:50px"><col style="width:80px"><col style="width:55px"><col style="width:77px"><col style="width:75px"><col style="width:76px"><col style="width:185px"><col style="width:101px"><col style="width:101px"><col style="width:101px"><col style="width:101px"><col style="width:4px"></colgroup>
<thead><tr><th></th><th>OBJECTID *</th><th>Shape *</th><th>FID_US_GEO_CoalFields</th><th>AREA</th><th>PERIMETER</th><th>USCOAL_</th><th>USCOAL_ID</th><th>COALTYPE</th><th>DESCRIPTIO</th><th>RED</th><th>GREEN</th><th>BLUE</th><th>VERTICES</th><th>ARCS</th><th>ISLANDS</th><th>X_COORD</th><th>Y_COORD</th><th>FID_MissouriIllinois</th><th>PSTATENAME</th><th>PSTATEABBR</th><th>PSTATEFIPS</th><th>PSTATEGNIS</th><th></th></tr></thead>
<tbody>
<tr class="cur"><td><i></i></td><td>1</td><td class="l">Polygon</td><td>362</td><td>14.819</td><td>50.815</td><td>364</td><td>484</td><td>60</td><td class="l">Medium and High Volitile Bituminous</td><td>117</td><td>145</td><td>168</td><td>17251</td><td>73</td><td>15</td><td>-94.161</td><td>39.063</td><td>1</td><td class="l">MISSOURI</td><td class="l">MO</td><td class="l">29</td><td class="l">1779791</td><td></td></tr>
<tr><td></td><td>2</td><td class="l">Polygon</td><td>433</td><td>0.209</td><td>9.692</td><td>435</td><td>586</td><td>65</td><td class="l">Medium and High Volitile Bituminous / of doubt</td><td>135</td><td>209</td><td>191</td><td>2276</td><td>6</td><td>0</td><td>-90.723</td><td>41.152</td><td>2</td><td class="l">ILLINOIS</td><td class="l">IL</td><td class="l">17</td><td class="l">&lt;Null&gt;</td><td></td></tr>
<tr><td></td><td>3</td><td class="l">Polygon</td><td>435</td><td>12.717</td><td>30.37</td><td>437</td><td>587</td><td>60</td><td class="l">Medium and High Volitile Bituminous</td><td>117</td><td>145</td><td>168</td><td>7400</td><td>49</td><td>9</td><td>-88.723</td><td>39.662</td><td>2</td><td class="l">ILLINOIS</td><td class="l">IL</td><td class="l">17</td><td class="l">&lt;Null&gt;</td><td></td></tr>
<tr><td></td><td>4</td><td class="l">Polygon</td><td>488</td><td>0.004</td><td>0.277</td><td>490</td><td>595</td><td>65</td><td class="l">Medium and High Volitile Bituminous / of doubt</td><td>135</td><td>209</td><td>191</td><td>69</td><td>1</td><td>0</td><td>-90.296</td><td>41.575</td><td>2</td><td class="l">ILLINOIS</td><td class="l">IL</td><td class="l">17</td><td class="l">&lt;Null&gt;</td><td></td></tr>
<tr><td></td><td>5</td><td class="l">Polygon</td><td>535</td><td>0.008</td><td>0.409</td><td>537</td><td>598</td><td>65</td><td class="l">Medium and High Volitile Bituminous / of doubt</td><td>135</td><td>209</td><td>191</td><td>99</td><td>1</td><td>0</td><td>-88.892</td><td>41.392</td><td>2</td><td class="l">ILLINOIS</td><td class="l">IL</td><td class="l">17</td><td class="l">&lt;Null&gt;</td><td></td></tr>
<tr><td></td><td>6</td><td class="l">Polygon</td><td>561</td><td>0.007</td><td>0.601</td><td>563</td><td>608</td><td>0</td><td class="l">NO COAL / INTERNAL POLYGON</td><td>0</td><td>0</td><td>0</td><td>147</td><td>1</td><td>0</td><td>-88.917</td><td>41.225</td><td>2</td><td class="l">ILLINOIS</td><td class="l">IL</td><td class="l">17</td><td class="l">&lt;Null&gt;</td><td></td></tr>
<tr><td></td><td>7</td><td class="l">Polygon</td><td>597</td><td>0.034</td><td>1.606</td><td>599</td><td>637</td><td>65</td><td class="l">Medium and High Volitile Bituminous / of doubt</td><td>135</td><td>209</td><td>191</td><td>385</td><td>2</td><td>0</td><td>-87.9</td><td>40.786</td><td>2</td><td class="l">ILLINOIS</td><td class="l">IL</td><td class="l">17</td><td class="l">&lt;Null&gt;</td><td></td></tr>
<tr><td></td><td>8</td><td class="l">Polygon</td><td>612</td><td>0.01</td><td>0.657</td><td>614</td><td>658</td><td>65</td><td class="l">Medium and High Volitile Bituminous / of doubt</td><td>135</td><td>209</td><td>191</td><td>149</td><td>1</td><td>0</td><td>-90.351</td><td>40.71</td><td>2</td><td class="l">ILLINOIS</td><td class="l">IL</td><td class="l">17</td><td class="l">&lt;Null&gt;</td><td></td></tr>
<tr><td></td><td>9</td><td class="l">Polygon</td><td>654</td><td>0.008</td><td>0.375</td><td>656</td><td>683</td><td>65</td><td class="l">Medium and High Volitile Bituminous / of doubt</td><td>135</td><td>209</td><td>191</td><td>93</td><td>2</td><td>0</td><td>-90.898</td><td>40.282</td><td>2</td><td class="l">ILLINOIS</td><td class="l">IL</td><td class="l">17</td><td class="l">&lt;Null&gt;</td><td></td></tr>
</tbody></table>
<div class="sbh g1"><i class="ar lf"></i><div class="th"><i></i></div><i class="ar rt"></i></div>
</div>
<div class="sbv g2"><i class="ar up"></i><div class="th"><i></i></div><i class="ar dn"></i></div>
</div>
<div class="recnav"><svg class="rn" viewBox="0 0 12 12"><path d="M2.500 1v10" stroke="#000" stroke-width="2"/><path d="M10 1v10L4.500 6z"/></svg><svg class="rn" viewBox="0 0 12 12"><path d="M9 1v10L3.500 6z"/></svg><span class="rec">1</span><svg class="rn" viewBox="0 0 12 12"><path d="M3 1v10l5.500-5z"/></svg><svg class="rn" viewBox="0 0 12 12"><path d="M9.500 1v10" stroke="#000" stroke-width="2"/><path d="M2 1v10l5.500-5z"/></svg><i class="s"></i><b class="b on"><i class="stripes"></i></b><b class="b"><i class="stripes half"></i></b><i class="s"></i><span class="seltxt">(0 out of 43 Selected)</span></div>
<div class="tabs"><span>CoalFields</span></div>
</section>

<main class="work">
<aside class="toc">
<div class="ptitle act"><span>Table Of Contents</span><svg><use href="#pin"/></svg><svg><use href="#cls"/></svg></div>
<div class="toctools"><b class="b on"><svg><use href="#t1"/></svg></b><b class="b"><svg><use href="#t2"/></svg></b><b class="b"><svg><use href="#t3"/></svg></b><b class="b"><svg><use href="#t4"/></svg></b><i class="s"></i><b class="b"><svg><use href="#opt"/></svg></b></div>
<div class="toclist">
<div class="tr r0"><i class="ex"></i><svg class="ly"><use href="#lyr"/></svg><strong>Layers</strong></div>
<div class="tr r1"><i class="ex"></i><svg class="ck" viewBox="0 0 13 13"><path d="M.6.600h11.800v11.800H.6z" fill="#fff" stroke="#222" stroke-width="1.200"/><path d="M3 6.500l2.500 3L10 3" fill="none" stroke="#000" stroke-width="2"/></svg><span>CoalFields</span></div>
<div class="tr r2"><i class="sw va"></i><span>&lt;all other values&gt;</span></div>
<div class="tr r3"><span>PSTATENAME</span></div>
<div class="tr r2"><i class="sw vi"></i><span>ILLINOIS</span></div>
<div class="tr r2"><i class="sw vm"></i><span>MISSOURI</span></div>
<div class="tr r1"><i class="ex"></i><svg class="ck" viewBox="0 0 13 13"><path d="M.6.600h11.800v11.800H.6z" fill="#fff" stroke="#222" stroke-width="1.200"/><path d="M3 6.500l2.500 3L10 3" fill="none" stroke="#000" stroke-width="2"/></svg><span>MissouriIllinois</span></div>
<div class="tr r2"><i class="sw vg"></i></div>
<svg class="cursor" viewBox="0 0 14 22"><path d="M1 1v17l4-3.500 3 6.500 3-1.500-3-6.500h5z" fill="#fff" stroke="#222" stroke-width="1.200"/></svg>
</div>
</aside>

<section class="mapframe">
<div class="maptop">
<svg class="map" viewBox="438 486 1608 857" preserveAspectRatio="none">
<g transform="translate(1240 490) scale(.33333)" class="shp">
<path class="gray" d="M-1150 890L-747 889-85 852-55 870-35 895-20 915 2 936-10 961-15 1005-10 1055 10 1080 8 1105 15 1125 35 1145 35 1172 60 1200 90 1220 95 1240 115 1250 130 1275 180 1302 222 1340 228 1360 240 1398 235 1422 248 1460 275 1482 295 1470 305 1445 365 1458 400 1480 410 1495 385 1525 392 1565 372 1600 368 1638 348 1668 345 1690 352 1722 375 1738 395 1762 415 1775 440 1790 460 1805 480 1812 470 1825 490 1843 508 1830 525 1842 555 1860 560 1872 610 1900 620 1938 608 1948 615 1960 632 1982 643 2005 642 2025 620 2040 620 2055 635 2065 640 2092 460 2352 295 2365 0 2378-400 2393-740 2404-864 2404-867 2137-873 1600-873 1415-900 1385-930 1194-1040 1075-1100 980Z"/>
<path class="gray" d="M175 135L275 127 395 120 540 112 670 105 760 98 880 88 1045 73 1083 67 1160 65 1153 170 1143 250 1137 335 1130 341 1048 348 1085 770 1125 1235 1102 1260 1110 1290 1095 1325 1135 1385 1145 1450 1120 1498 1085 1580 1045 1640 1020 1690 1003 1800 1003 1890 1010 1912 1032 1930 1030 1950 975 1962 950 1982 935 1976 920 1978 912 2010 912 2038 938 2070 930 2110 905 2110 880 2092 845 2085 825 2072 795 2062 765 2062 720 2085 645 2090 635 2065 620 2055 620 2040 642 2025 643 2005 632 1982 615 1960 608 1948 620 1938 610 1900 560 1872 555 1860 525 1842 508 1830 490 1843 470 1825 480 1812 460 1805 440 1790 415 1775 395 1762 375 1738 352 1722 345 1690 348 1668 368 1638 372 1600 392 1565 385 1525 410 1495 400 1480 365 1458 305 1445 295 1470 275 1482 248 1460 235 1422 240 1398 228 1360 222 1340 180 1302 130 1275 115 1250 95 1240 90 1220 60 1200 35 1172 35 1145 15 1125 8 1105 10 1080-10 1055-15 1005-10 961 2 936 20 930 22 900 18 882 10 870 30 840 75 832 90 812 85 800 92 765 128 720 125 655 98 635 77 605 87 570 95 540 115 538 145 527 190 522 220 498 255 495 265 480 282 470 280 440 288 405 320 388 327 345 325 300 320 268 300 253 262 238 245 222 243 190 232 178 205 160 178 145Z"/>
<path class="or" d="M490 402L515 395 555 402 572 420 576 442 575 460 590 475 620 490 632 508 645 528 640 545 665 547 700 547 712 530 718 505 735 495 765 488 790 485 825 488 828 515 860 515 877 505 880 520 892 535 895 610 910 635 913 665 940 685 960 700 985 702 1000 722 1015 740 1045 768 1068 763 1085 768 1087 800 1077 803 1076 830 1090 835 1100 980 1108 1060 1118 1160 1126 1235 1118 1248 1102 1255 1106 1275 1118 1290 1098 1325 1115 1340 1125 1362 1142 1380 1138 1410 1155 1450 1150 1488 1130 1498 1122 1525 1120 1555 1092 1572 1098 1590 1080 1615 1072 1642 1062 1640 1055 1645 1045 1640 1032 1670 1055 1690 1042 1702 1045 1722 1025 1735 1030 1752 1032 1765 1030 1785 1012 1790 1030 1803 1015 1815 1032 1835 1022 1860 1003 1880 1010 1912 1020 1925 995 1925 982 1940 970 1915 940 1913 925 1935 915 1965 890 1995 870 1992 897 1965 895 1955 850 1962 835 1972 790 1970 765 1958 760 1950 735 1942 725 1950 715 1940 708 1950 700 1942 690 1948 682 1938 672 1945 660 1938 645 1930 642 1910 625 1880 600 1862 570 1845 565 1835 545 1812 520 1790 500 1805 497 1795 515 1778 497 1740 480 1705 458 1685 440 1672 425 1640 418 1615 420 1590 437 1560 440 1530 440 1490 420 1470 395 1458 380 1445 357 1420 350 1430 338 1410 330 1395 342 1365 335 1340 313 1325 320 1305 342 1278 315 1272 288 1270 290 1255 305 1240 307 1215 325 1210 340 1195 325 1188 290 1200 275 1160 280 1130 300 1105 335 1105 345 1080 320 1065 325 1055 400 1035 470 1025 490 1005 525 1008 528 988 490 985 487 995 440 985 465 982 480 970 495 950 525 935 540 918 530 885 503 858 512 830 510 805 490 835 455 838 430 870 408 900 390 905 382 930 372 932 355 910 325 908 305 900 320 912 365 940 350 970 320 1000 290 1035 255 1062 230 1025 205 1010 200 985 195 965 200 945 185 930 160 915 135 895 140 880 132 850 142 812 165 800 180 788 195 795 198 755 202 785 222 790 240 790 240 765 220 728 190 715 190 705 215 712 220 685 205 655 188 640 165 632 145 640 125 625 112 600 103 570 120 562 150 548 175 540 240 530 258 520 240 512 225 510 250 502 275 500 285 512 320 500 345 480 400 468 450 470 495 475 500 452 495 435Z"/>
<path class="or" d="M93 1005L120 980 165 980 180 1010 215 1040 230 1080 225 1100 180 1115 150 1115 145 1102 130 1108 135 1125 205 1128 190 1145 192 1165 225 1168 215 1178 165 1190 148 1175 147 1155 95 1140 77 1120 92 1095 88 1040 102 1020Z"/>
<path class="or" d="M137 962L145 952 170 955 175 968 160 978 140 972ZM282 478L300 463 308 470 288 488ZM662 525L675 510 708 505 705 520 690 528ZM440 1685L455 1680 480 1700 470 1720 457 1732 440 1720ZM378 1655L390 1655 395 1675 388 1668ZM250 1455L265 1462 285 1468 262 1468ZM645 2092L665 2085 720 2085 735 2053 765 2065 740 2098 738 2120 722 2135 720 2155 735 2160 718 2158 700 2140 700 2155 665 2138 665 2120Z"/>
<path class="ln" d="M497 475L533 490 500 455 498 420 520 405M533 490L495 487 400 483 340 490 315 520 280 520 265 538 210 545 140 555 137 570 155 595 180 605 240 600 248 588 225 600 190 622 220 660 225 678 250 683 232 700 215 725 230 730 240 790M240 790L200 800 152 822 147 860 155 895 175 905 225 892 232 878 210 865 265 862 262 875 250 880 260 900 245 937 232 920 205 920 195 940M265 800L290 788 270 770 285 768 300 790 328 790 315 803 270 805M255 980L275 982 287 995 262 992ZM852 945L865 942 877 970 877 988 865 990 855 970ZM895 1068L905 1062 920 1102 907 1106ZM650 550L655 565 715 570 718 575 700 580 662 587 660 570M913 665L930 695 975 730 1045 785 1085 785M515 1778L555 1790 560 1812 590 1820 605 1803 625 1808 630 1855 700 1895 760 1912 820 1926 870 1915 920 1905 923 1890 930 1905 1005 1912M187 1215l4-6-4-2z"/>
<path class="red" d="M295 2365L345 2290 400 2225 440 2180 480 2150 525 2125 580 2107 640 2095 665 2138 700 2155 690 2130 710 2135 730 2155 748 2162 742 2205 728 2218 748 2235 730 2245 725 2262 737 2275 732 2305 712 2312 695 2305 685 2290 678 2300 665 2350 652 2357 645 2345 652 2325 645 2315 622 2318 625 2330 638 2345 630 2360 643 2395 635 2402 618 2402 612 2410 637 2430 632 2440 588 2438 625 2475 600 2505 585 2532 398 2545 412 2510 437 2490 437 2478 465 2452 478 2430 478 2395 458 2390 450 2357Z"/>
<path class="ln" d="M468 2180L480 2170 510 2165 528 2158 522 2190 533 2210 510 2225 480 2290 478 2300 485 2345 470 2358 460 2355 470 2335 468 2310 475 2290 475 2240 467 2215ZM640 2095L600 2120 588 2135 595 2140 640 2105"/>
<path class="red" d="M355 1485L360 1510 385 1505 385 1530 395 1565 375 1597 350 1580 340 1562 312 1562 310 1545 330 1510 350 1502ZM288 1520l6 0-3 12zM328 1585l10 0 0 8-10 0z"/>
</g>
<g transform="translate(820 740) scale(.33333 .36991)" class="shp">
<path class="red" d="M53 125L515 125 610 120 730 117 860 112 980 105 1085 98 1175 92 1188 108 1203 125 1203 140 1180 138 1178 150 1197 158 1185 175 1180 195 1195 205 1190 222 1165 222 1150 205 1125 195 1100 182 1032 182 1010 192 1002 205 1007 230 1002 265 1017 280 1012 300 1025 320 1018 335 1042 370 1110 388 1135 405 1132 425 1120 430 1140 445 1140 470 1085 455 1045 420 1035 425 1050 440 1080 455 1100 470 1140 475 1120 482 1075 490 1050 515 1085 493 1105 492 1102 505 1135 492 1170 480 1170 510 1135 538 1165 520 1155 535 1163 558 1168 530 1187 515 1187 490 1205 472 1213 500 1225 503 1227 462 1250 458 1250 510 1260 510 1258 490 1295 495 1303 540 1335 570 1335 590 1295 583 1310 595 1310 608 1340 617 1320 640 1312 670 1288 678 1280 655 1238 645 1245 625 1205 612 1230 635 1215 645 1232 655 1215 665 1217 690 1205 672 1190 655 1150 625 1140 635 1165 650 1185 685 1160 665 1142 670 1162 695 1160 710 1132 718 1120 730 1098 732 1100 715 1095 665 1085 655 1083 700 1055 712 1050 695 1068 690 1062 678 1040 675 1032 655 1020 655 1038 640 1012 612 1003 625 985 630 970 622 955 625 940 625 932 605 920 625 895 637 882 632 885 600 902 575 895 530 878 505 850 512 780 507 745 537 700 545 640 540 610 555 592 585 620 592 700 585 758 572 775 590 790 625 815 632 790 650 785 632 768 632 768 655 715 662 705 652 702 672 715 690 740 672 775 672 750 690 755 700 750 730 705 745 735 748 712 770 710 790 725 812 760 812 762 828 778 840 755 850 735 867 715 857 700 862 690 855 668 858 695 880 690 888 652 902 665 915 660 955 635 960 632 975 580 980 522 972 575 990 545 1022 560 1020 590 992 635 997 635 1015 600 1048 635 1055 615 1075 605 1065 580 1078 575 1092 555 1098 560 1110 590 1100 583 1130 583 1178 570 1178 560 1160 550 1162 555 1188 542 1188 535 1160 520 1158 515 1195 480 1197 455 1218 415 1220 393 1250 390 1110 388 790 386 605 372 598 340 598 322 580 325 570 300 550 302 525 262 500 240 468 255 455 262 432 285 405 308 405 290 398 305 380 288 355 268 355 262 365 240 360 215 348 180 312 152 308 157 285 135 255 132 238 88 215 90 195 78 180 76 145 53 145ZM852 628L850 610 855 570 835 545 790 533 775 545 785 560 778 575 810 575 812 600 830 620ZM1104 380L1135 378 1160 410 1170 450 1195 458 1200 445 1182 438 1208 435 1203 395 1165 402 1170 370 1145 360 1130 375ZM900 668L910 657 957 657 955 664 910 668Z"/>
<path class="ln" d="M393 1180L445 1195 490 1187 515 1195M1010 570L1050 578 1062 600 1055 618 1040 590 1012 580ZM1090 575L1110 585 1125 585 1125 600 1100 592ZM518 1075L530 1068 535 1078 522 1087ZM1030 432L1048 452 1072 465 1055 465 1032 445ZM580 1055l10-5M540 1035l8-3"/>
<path class="wh" d="M77 132h8v12h-8z"/>
</g>
</svg>
<div class="sbv mv"><i class="ar up"></i><div class="th"><i></i></div><i class="ar dn"></i></div>
</div>
<div class="mapbot"><b class="mb on3"><svg viewBox="0 0 12 14"><path d="M1 1h10v12H1z" fill="#fff" stroke="#222" stroke-width="1.600"/><path d="M3 11l6-8v8z" fill="#5c9a3c"/></svg></b><b class="mb"><svg viewBox="0 0 12 14"><path d="M1 1h7l3 3v9H1z" fill="#fff" stroke="#222" stroke-width="1.400"/><path d="M3 5h5M3 8h6M3 10.500h6" stroke="#2b66b4" stroke-width="1.400"/></svg></b><i class="s"></i><b class="mb"><svg viewBox="0 0 14 14"><path d="M2 6c1-5 8-5 10-1M12 8c-1 5-8 5-10 1" fill="none" stroke="#2b66b4" stroke-width="1.800"/><path d="M13 1v5H8zM1 13V8h5z" fill="#2b66b4"/></svg></b><b class="mb"><svg viewBox="0 0 12 14"><path d="M3.500 2v10M8.500 2v10" stroke="#2b66b4" stroke-width="2.200"/></svg></b>
<div class="sbh mh"><i class="ar lf"></i><div class="th"><i></i></div><i class="ar rt"></i></div></div>
</section>

<aside class="cat">
<div class="ptitle dimt"><span>Catalog</span><svg><use href="#pin"/></svg><svg><use href="#cls"/></svg></div>
<div class="cattools"><svg class="a1"><use href="#cb"/></svg><i class="c"></i><svg class="a2"><use href="#cf"/></svg><svg class="a3"><use href="#cu"/></svg><svg><use href="#ch"/></svg><svg><use href="#cg"/></svg><i class="s"></i><svg class="a4"><use href="#cgrid"/></svg><i class="c dm"></i><i class="s"></i><svg><use href="#cfc"/></svg><i class="s"></i><svg><use href="#ctree"/></svg><i class="s"></i><svg><use href="#opt"/></svg></div>
<div class="loc"><span>Location:</span><div class="combo"><svg><use href="#spoly"/></svg><span>US_GEO_CoalFields.shp</span><i class="c"></i></div></div>
<div class="cattree">
<div class="treerow">
<div class="tree">
<div class="n l0"><svg><use href="#fhome"/></svg><span>Home - Prenercg\Desktop</span></div>
<div class="n l1"><i class="ex p"></i><svg><use href="#fold"/></svg><span>nbrhds_wards</span></div>
<div class="n l1"><i class="ex p"></i><svg><use href="#fold"/></svg><span>tl_2017_29_tabblock10</span></div>
<div class="n l1"><i class="ex p"></i><svg><use href="#gdb"/></svg><span>lab11.gdb</span></div>
<div class="n l1"><i class="ex no"></i><svg class="m"><use href="#mxd"/></svg><span>lab11-part02.mxd</span></div>
<div class="n l1"><i class="ex no"></i><svg class="m"><use href="#mxd"/></svg><span>lab11-part03.mxd</span></div>
<div class="n l1"><i class="ex no"></i><svg class="m"><use href="#mxd"/></svg><strong>lab12.mxd</strong></div>
<div class="n l0"><svg><use href="#fconn"/></svg><span>Folder Connections</span></div>
<div class="n l1"><i class="ex p"></i><svg><use href="#fcon"/></svg><span>C:\Users\prenercg\Desktop</span></div>
<div class="n l1 long"><i class="ex p"></i><svg><use href="#fcon"/></svg><span>C:\Users\prenercg\Documents\GitHub\Barrie</span></div>
<div class="n l1"><i class="ex p"></i><svg><use href="#fcon"/></svg><span>E:\GIS Projects</span></div>
<div class="n l1"><i class="ex"></i><svg><use href="#fcon"/></svg><span>E:\SOC5650</span></div>
<div class="n l2"><i class="ex"></i><svg><use href="#fold"/></svg><span>DataLibrary</span></div>
<div class="n l3"><i class="ex"></i><svg><use href="#fold"/></svg><span>CourseData</span></div>
<div class="n l4"><i class="ex p"></i><svg><use href="#fold"/></svg><span>MetroHydro</span></div>
<div class="n l4"><i class="ex p"></i><svg><use href="#fold"/></svg><span>MetroWx</span></div>
<div class="n l4"><i class="ex p"></i><svg><use href="#fold"/></svg><span>MO_DEMOS_JeffCityRegion</span></div>
<div class="n l4"><i class="ex p"></i><svg><use href="#fold"/></svg><span>MOBoundary</span></div>
<div class="n l4"><i class="ex p"></i><svg><use href="#fold"/></svg><span>MOEarthquake</span></div>
<div class="n l4"><i class="ex p"></i><svg><use href="#fold"/></svg><span>MOHealth</span></div>
<div class="n l4"><i class="ex p"></i><svg><use href="#fold"/></svg><span>MOHydro</span></div>
<div class="n l4"><i class="ex p"></i><svg><use href="#fold"/></svg><span>MOInfra</span></div>
<div class="n l4"><i class="ex p"></i><svg><use href="#fold"/></svg><span>Projections</span></div>
<div class="n l4"><i class="ex p"></i><svg><use href="#fold"/></svg><span>StLouis</span></div>
<div class="n l4"><i class="ex p"></i><svg><use href="#fold"/></svg><span>USEarthquake</span></div>
<div class="n l4"><i class="ex p"></i><svg><use href="#fold"/></svg><span>USHealth</span></div>
<div class="n l4"><i class="ex"></i><svg><use href="#fold"/></svg><span>USInfra</span></div>
<div class="n l5 hl"><svg><use href="#spoly"/></svg><span>US_GEO_CoalFields.shp</span></div>
<div class="n l5"><svg><use href="#spoly"/></svg><span>US_GEO_SedBasins.shp</span></div>
<div class="n l5"><svg><use href="#spt"/></svg><span>US_INFRA_CoalMines.shp</span></div>
<div class="n l5"><svg><use href="#sln"/></svg><span>US_INFRA_OilPipelines.shp</span></div>
<div class="n l5"><svg><use href="#spt"/></svg><span>US_INFRA_OilTerminals.shp</span></div>
<div class="n l5"><svg><use href="#sln"/></svg><span>US_INFRA_PetroPipelines.shp</span></div>
<div class="n l5"><svg><use href="#spt"/></svg><span>US_INFRA_PetroRefineries.shp</span></div>
<div class="n l5"><svg><use href="#spt"/></svg><span>US_INFRA_PetroTerminals.shp</span></div>
<div class="n l4"><i class="ex p"></i><svg><use href="#gdb"/></svg><span>JeffCity.gdb</span></div>
<div class="n l4"><i class="ex p"></i><svg><use href="#gdb"/></svg><span>KansasCity.gdb</span></div>
<div class="n l4"><i class="ex p"></i><svg><use href="#gdb"/></svg><span>MetroUnemploy.gdb</span></div>
</div>
<div class="sbv cv"><i class="ar up"></i><div class="th"><i></i></div><i class="ar dn"></i></div>
</div>
<div class="sbh chs"><i class="ar lf"></i><div class="th"><i></i></div><i class="ar rt"></i></div>
</div>
</aside>
</main>

<div class="status"><span>-99.165&nbsp; 39.652 Decimal Degrees</span></div>

<footer class="taskbar">
<div class="tk st"><svg viewBox="0 0 44 44"><circle cx="22" cy="22" r="21.500" fill="url(#gStart)" stroke="#1c3650"/><path d="M11 14c4-2.500 7-2.500 10-.5l-2 8.500c-3-2-6-2-10 0z" fill="#ee6a2a"/><path d="M23 14.500c3 2 6 2 10 0L31 23c-4 2-7 2-10 0z" fill="#8fc43c"/><path d="M8.500 24c4-2 7-2 10 0L16.500 32c-3-2-6-2-10 0z" fill="#4a9be2"/><path d="M20.500 25c3 2 6 2 10 0l-2 8c-4 2-7 2-10 0z" fill="#fcc92f"/></svg></div>
<div class="tk"><svg viewBox="0 0 40 40"><path d="M31 27.500c-2 4-6 6.500-10.500 6.500C14 34 9 29 9 22.500S14 11 20.500 11 32 16 32 23H10" fill="none" stroke="url(#gIE)" stroke-width="6"/><path d="M4 36C-2 30 14 4 30 3c8 0 6 8 2 12C36 6 31 4 22 9 12 15 4 28 6 33c1 3 6 2 10-1-4 5-9 7-12 4z" fill="#f2b91e" stroke="#c88d08" stroke-width=".5"/></svg></div>
<div class="tk"><svg viewBox="0 0 40 40"><path d="M2 34V5l3-2h9l2 3h20v28z" fill="#edd17a" stroke="#b79136"/><path d="M6 4h5v3H6z" fill="#3ea33a"/><path d="M14 6h6v3h-6z" fill="#c43"/><path d="M2 34V12l14-1 3-2h19v25z" fill="#fbeeb2" stroke="#c9a850"/><path d="M9 38V26c0-3 2-4 5-4h13c3 0 5 1 5 4v12h-5v-9H14v9z" fill="#9ad4f2" stroke="#4b9cc8"/></svg></div>
<div class="tk"><svg viewBox="0 0 36 36"><circle cx="18" cy="18" r="17" fill="#fbcf34"/><path d="M18 1a17 17 0 0 1 14.700 8.500H18L10.600 22.300 3.300 9.500A17 17 0 0 1 18 1z" fill="#dc4437"/><path d="M3.300 9.500A17 17 0 0 0 16.500 35l7.500-13.500L10.600 22.300z" fill="#2ba24c"/><circle cx="18" cy="18" r="8" fill="#fff"/><circle cx="18" cy="18" r="6.300" fill="#4285f4"/></svg></div>
<div class="tk"><svg viewBox="0 0 38 38"><path d="M3 6l6-4h25v30l-5 4H3z" fill="#fff" stroke="#3e8c42" stroke-width="1.500"/><path d="M3 6h26v30H3z" fill="#eaf5e6" stroke="#3e8c42"/><path d="M6 9h7l4 8 5-8h6l-8 13 5 8h-7l-3-6-4 6H5l8-12z" fill="#257a34"/><path d="M19 21l17-3v17l-13 1z" fill="#fff" stroke="#7aa37a"/><path d="M21 25l14-2M22 29l13-2M23 33l12-2M27 20v15M31 19v16" stroke="#8ab98a"/></svg></div>
<div class="tk"><svg viewBox="0 0 40 40"><path d="M15 6L27 1l10 4v26l-12 7-10-4z" fill="#d8a91e" stroke="#7c5c08"/><path d="M15 6l10 4v28l-10-4z" fill="#f4d04a" stroke="#7c5c08"/><path d="M25 10l12-5" stroke="#7c5c08"/><path d="M17 11l6 2.500v3L17 14M2 27l12-5 10 4v8l-11 5-11-5z" fill="#e8be2c" stroke="#7c5c08"/><circle cx="14" cy="23" r="7.500" fill="url(#gGlobe)"/><path d="M2 28l11 4.500L24 28v7l-11 4-11-4z" fill="#f2cd45" stroke="#7c5c08"/></svg></div>
<div class="tk cur"><svg viewBox="0 0 36 36"><use href="#arcmap"/></svg></div>
<div class="tk"><svg viewBox="0 0 36 36"><circle cx="18" cy="18" r="17.500" fill="url(#gAtom)"/><g fill="none" stroke="#fff" stroke-width="1.200"><ellipse cx="18" cy="18" rx="4" ry="11"/><ellipse cx="18" cy="18" rx="4" ry="11" transform="rotate(60 18 18)"/><ellipse cx="18" cy="18" rx="4" ry="11" transform="rotate(120 18 18)"/></g><circle cx="18" cy="18" r="1.500" fill="#fff"/></svg></div>
<div class="tk"><svg viewBox="0 0 36 36"><ellipse cx="18" cy="33" rx="14" ry="3" fill="#5a708c"/><circle cx="18" cy="17.500" r="17" fill="url(#gR)"/><text x="18.500" y="25" text-anchor="middle" class="rtxt">R</text></svg></div>
<div class="tk"><svg viewBox="0 0 36 36"><circle cx="18" cy="18" r="17" fill="url(#gCat)" stroke="#e8dff0" stroke-width="1.200"/><path d="M10 8l5 3.500h6L26 8c1 2 1.500 3 1.300 6 3 8-1 14-9.300 14S6 22 9 14c-.5-3 0-4 1-6z" fill="#f7f4fa"/></svg></div>
<div class="tray"><svg class="up" viewBox="0 0 10 6"><path d="M0 6l5-6 5 6z" fill="#fff"/></svg><svg viewBox="0 0 20 18"><path d="M5 1l5 3-5 3-5-3zM15 1l5 3-5 3-5-3zM5 7l5 3-5 3-5-3zM15 7l5 3-5 3-5-3zM10 11.500l4 2.500-4 3-4-3z" fill="#fff"/></svg><svg viewBox="0 0 20 20"><path d="M6.500 4.500h12v10h-12z" fill="#8fa3b8" stroke="#fff" stroke-width="1.600"/><path d="M1 1v5h4V1M3 6v12h9M9 18.500h9" stroke="#fff" stroke-width="1.800" fill="none"/></svg><svg viewBox="0 0 20 20"><path d="M1 6h3l6-5v17l-6-5H1z" fill="#fff"/><circle cx="14" cy="13.500" r="5.500" fill="#dc2b22"/><path d="M11.500 11l5 5M16.500 11l-5 5" stroke="#fff" stroke-width="2"/></svg></div>
<div class="clock"><span>1:22 PM</span><span>4/23/2018</span></div>
<div class="desk"></div>
</footer>
</div>
</body>
</html>
```
FILE: styles.css
```css
*{box-sizing:border-box}
html,body{margin:0;padding:0;background:#000;overflow:hidden}
body{width:2560px;height:1440px;font-family:"Open Sans","Noto Sans",sans-serif;font-size:13.8px;letter-spacing:-.22px;color:#111;line-height:1}
.defs{position:absolute}
i{font-style:normal;display:block;flex:none}
span,strong{white-space:pre}
svg{display:block;flex:none}
.app{width:2304px;height:1440px;margin-left:128px;display:flex;flex-direction:column;background:linear-gradient(90deg,#f0f0f0,#fbfbfb);overflow:hidden}

.titlebar{height:27px;flex:none;border-top:2px solid #3a3a3a;border-bottom:1px solid #e6eef6;background:linear-gradient(#98b1cf,#b9d2eb);display:flex;align-items:center;padding-left:3px}
.ticon{width:19px;height:20px;margin-right:9px}
.cap{padding-bottom:1px}
.wbtns{margin-left:auto;display:flex;gap:4px;padding-right:3px;align-self:flex-start}
.wb{width:36px;height:20px;border:1.500px solid #5d7189;border-radius:3px;background:linear-gradient(#c4d6e8 0 45%,#a5bdd5 46%,#bcd2e6);display:flex;align-items:center;justify-content:center;box-shadow:inset 0 0 0 1px #dbe8f4}
.wb.red{background:linear-gradient(#dc9a88 0 45%,#c04a34 46%,#d4664a);border-color:#6a3030;box-shadow:inset 0 0 0 1px #e7b5a8}
.mn{width:13px;height:6px;background:#fff;border:1px solid #445;margin-top:4px}
.menu{height:30px;flex:none;display:flex;align-items:center;gap:19.800px;padding:0 0 2px 15px}

.tbrow{height:30px;flex:none;display:flex;padding-left:4px}
.tbrow.second{height:32px;padding-top:1px}
.tb{display:flex;align-items:center;height:30px;background:linear-gradient(#fbfbfb,#ededed);border-radius:2px 0 0 2px}
.grip{width:8.500px;height:18px;background:radial-gradient(circle,#a0a0a0 1px,transparent 1.300px) 0 0/5px 5px repeat-y}
.b{width:26.400px;height:26px;display:flex;align-items:center;justify-content:center;flex:none}
.b svg{width:19px;height:19px}
.b.on{border:1.200px solid #3f9bf5;background:#dbe9f8}
.b.on2{border:1.200px solid #a3b0bd;background:#e6ecf2}
.b.dim{opacity:.45}
.s{width:7.200px;height:20px;background:linear-gradient(#bdbdbd,#bdbdbd) 3px 0/1.200px 100% no-repeat}
.c{width:10px;height:5px;margin:0 1px 0 2px;background:#111;clip-path:polygon(15% 0,85% 0,50% 100%)}
.c.dm{background:#888}
.c.w{width:12px;margin:0 3.800px}
.ov{width:13px;height:30px;background:linear-gradient(#eee,#9c9c9c);display:flex;position:relative}
.ov::before{content:"";position:absolute;left:3px;top:19px;width:7px;height:1.500px;background:#111}
.ov::after{content:"";position:absolute;left:3px;top:23px;width:7px;height:5px;background:#111;clip-path:polygon(0 0,100% 0,50% 100%)}
.combo{height:24px;background:#fff;border:1px solid #cdd2d8;border-top-color:#8f959c;display:flex;align-items:center;padding:0 3px 0 4px;font-size:13.500px}
.combo .c{margin:0 0 0 auto}
.scale{width:178px;font-size:14px;letter-spacing:-.7px}
.draw{margin-left:39px}
.lbl{padding:0 1px 0 6px;letter-spacing:-.2px}
.font{width:203px;margin-left:1px;letter-spacing:-.4px}
.font svg{width:17px;height:18px;margin-right:3px}
.size{width:54px;margin-left:2px;letter-spacing:-.6px}
.g{font-family:"Liberation Serif",serif;font-weight:700;font-size:18px;letter-spacing:0}
.big{font-size:21px}
.it{font-style:italic;font-weight:400}
.un{text-decoration:underline;font-weight:400}
.b.u{position:relative;padding-bottom:6px}
.b.u svg{width:17px;height:15px}
.b.u::after{content:"";position:absolute;left:2px;right:2px;bottom:1px;height:3.500px;background:#000}
.b.y::after{background:#fdf9b0}
.b.gr::after{background:#4df000}
.dot{width:7px;height:7px;border-radius:50%;background:#00c}
.lay{margin-left:auto;margin-right:9px}
.pct{width:71px;padding-left:2px;border:1.200px solid #c3c3c3;margin:0 2px}
.pct span{background:#3394f5;color:#5c6f8c;padding:2px 0;width:32px;letter-spacing:-.6px}
.pct .c{background:#999}
.edit{margin-left:207px}
.edit .lbl{padding-left:5px}

.ptitle{height:24px;flex:none;display:flex;align-items:center;padding:0 5px 0 5px;gap:7px}
.ptitle span{margin-right:auto}
.ptitle svg{width:12px;height:12px}
.dimt{background:linear-gradient(90deg,#bfcedc,#d6e4f1);color:#4a4f55}
.act{background:linear-gradient(90deg,#9ab4d1,#b9d2eb);font-size:14.400px;letter-spacing:-.15px;padding-right:3px}
.ttools{height:31px;display:flex;align-items:center;background:linear-gradient(#fdfdfd,#eee);padding-left:4px}
.ttools .s{margin:0 .5px}
.tablepane{flex:none;display:flex;flex-direction:column;height:365px}
.gridwrap{height:219px;flex:none;border-top:5px solid #848484;border-left:4px solid #848484;display:flex;background:#f0f0f0;margin-right:1px}
.gridcol{width:2274px;flex:none;overflow:hidden}
.grid{border-collapse:collapse;table-layout:fixed;width:2276px;background:#fff;font-family:"Liberation Sans",Arial,sans-serif;font-size:13.200px;letter-spacing:-.22px}
.grid th{height:20px;padding:0 2px;border:0;border-right:2px solid #222;border-bottom:2px solid #111;background:#f0f0f0;font-weight:700;letter-spacing:-.25px;overflow:hidden;white-space:nowrap;line-height:18px}
.grid td{height:19.200px;padding:0 5px;border-right:1.500px solid #707070;border-bottom:1.500px solid #8c8c8c;text-align:right;white-space:nowrap;overflow:hidden;line-height:17px}
.grid td.l{text-align:left}
.grid td:nth-child(5){padding:0 4px}
.grid td:first-child{background:#f0f0f0;border-right:2px solid #222;border-bottom:2px solid #222;padding:0}
.cur td:nth-child(2){border-bottom:2px solid #111}
.cur td i{width:5px;height:9px;background:#000;clip-path:polygon(0 0,100% 50%,0 100%);margin-left:6px}
.ar{width:16px;height:16px;position:relative}
.ar::before{content:"";position:absolute;left:4px;top:4px;width:9px;height:9px;background:#444}
.ar.up::before{height:5px;top:6px;clip-path:polygon(50% 0,100% 100%,0 100%)}
.ar.dn::before{height:5px;top:6px;clip-path:polygon(0 0,100% 0,50% 100%)}
.ar.lf::before{width:5px;left:6px;clip-path:polygon(100% 0,100% 100%,0 50%)}
.ar.rt::before{width:5px;left:6px;clip-path:polygon(0 0,100% 50%,0 100%)}
.sbh{height:20px;display:flex;align-items:center;background:#ececec}
.sbh .th{height:18px;border:1px solid #9a9a9a;border-radius:2px;background:linear-gradient(#f4f4f4 0 40%,#dadada 50%,#bdbdbd);display:flex;align-items:center;justify-content:center}
.sbh .th i{width:9px;height:9px;background:repeating-linear-gradient(90deg,#666 0 1.200px,transparent 1.200px 3.500px)}
.sbh .rt{margin-left:auto}
.sbv{width:19px;display:flex;flex-direction:column;align-items:center;background:#ececec}
.sbv .th{width:17px;border:1px solid #9a9a9a;border-radius:2px;background:linear-gradient(90deg,#f4f4f4 0 40%,#dadada 50%,#bdbdbd);display:flex;align-items:center;justify-content:center}
.sbv .th i{width:9px;height:9px;background:repeating-linear-gradient(#666 0 1.200px,transparent 1.200px 3.500px)}
.sbv .dn{margin-top:auto}
.g1{margin-top:1px;padding-right:2px}
.g1 .th{width:1673px;margin-left:6px}
.g2{margin-left:1px;height:194px;background:#f3f3f3}
.g2 .up{margin-top:2px}
.g2 .th{height:30px;margin-top:3px}
.recnav{height:35px;flex:none;display:flex;align-items:center;background:linear-gradient(#fdfdfd,#ededed);padding-left:14px}
.rn{width:12px;height:12px;margin-right:15px}
.rec{width:70px;height:28px;background:#fff;text-align:right;line-height:28px;padding-right:5px;margin:0 7px 0 -6px}
.recnav .rn:nth-of-type(4){margin-right:5px}
.recnav .s{margin:0 1px}
.stripes{width:18px;height:18px;border:1px solid #333;background:repeating-linear-gradient(#bbb 0 3px,#5fb3bd 3px 6px,#fff 6px 7px)}
.half{height:12px;background:linear-gradient(#5fb3bd 0 30%,#3d8d98 30% 40%,#5fb3bd 40%);margin-top:-7px}
.seltxt{margin-left:4px}
.tabs{flex:1;padding-left:3px;border-top:1px solid #fff}
.tabs span{display:block;width:79px;height:23px;background:#fff;border:1px solid #bbb;border-top:0;border-radius:0 0 3px 3px;padding:4px 0 0 6px;box-shadow:0 1px 1px #aaa}

.work{flex:1;display:flex;min-height:0}
.toc{width:302px;display:flex;flex-direction:column;padding-right:1px;flex:none}
.toctools{height:31px;display:flex;align-items:center;padding-left:5px;background:linear-gradient(#fdfdfd,#eee)}
.toclist{flex:1;margin-left:1px;background:#fff;border:1.500px solid #7f8894;position:relative;margin-bottom:1px}
.tr{height:21.600px;display:flex;align-items:center;padding-top:3px}
.tr:first-child{padding-top:4px}
.ex{width:11px;height:11px;border:1.200px solid #999;border-radius:1.500px;background:linear-gradient(#39559a,#39559a) center/6px 1.300px no-repeat,#f6f6f6}
.ex.p{background:linear-gradient(#39559a,#39559a) center/6px 1.300px no-repeat,linear-gradient(#39559a,#39559a) center/1.300px 6px no-repeat,#f6f6f6}
.r0{padding-left:9px}
.ly{width:19px;height:16px;margin:0 6px 0 7px}
.r1{padding-left:32px}
.ck{width:13.500px;height:13.500px;margin:0 9px 0 9px}
.r2{padding-left:70px}
.sw{width:18px;height:13.500px;border:1.500px solid #777;margin-right:3.500px}
.va{background:#c9cff5}.vi{background:#ff8000}.vm{background:#e31a1c}.vg{background:#ccc}
.r3{padding-left:98px}
.cursor{position:absolute;left:125px;top:247px;width:14px;height:22px}

.mapframe{width:1630px;margin-left:6px;flex:none;display:flex;flex-direction:column;border-top:2px solid #6e6e6e;border-left:2px solid #6e6e6e;margin-bottom:1px;background:#f0f0f0}
.maptop{flex:1;display:flex;min-height:0}
.map{width:1608px;height:857px;background:#fff}
.shp path{vector-effect:non-scaling-stroke;stroke:#6e6e6e;stroke-width:1.300px;stroke-linejoin:round}
.gray{fill:#ccc}.or{fill:#ff8000}.red{fill:#e31a1c}.shp .ln{fill:none}.shp .wh{fill:#fff}
.mv{background:#eee;height:857px}
.mv .up{margin-top:2px}
.mv .th{height:755px;margin-top:18px}
.mapbot{height:23px;display:flex;align-items:center;flex:none;border-top:1px solid #ddd;padding-right:5px}
.mb{width:20px;height:21px;display:flex;align-items:center;justify-content:center}
.mb svg{width:11px;height:14px}
.on3{border:1.200px solid #777;background:#e0e0e0;border-radius:2px}
.mapbot .s{margin:0 1px 0 1px;filter:brightness(.6)}
.mh{width:1512px;margin-left:auto;margin-right:20px}
.mh .th{width:1468px;margin-left:5px}

.cat{width:360px;margin-left:6px;display:flex;flex-direction:column;min-height:0}
.cattools{height:24px;margin-top:4px;display:flex;align-items:center;background:linear-gradient(#fff,#dcdff3);padding-left:9px;border-bottom:1px solid #ccd}
.cattools svg{width:19px;height:18px;margin-right:8px}
.cattools .a1{height:14px;margin-right:6px}
.cattools .a2{margin-left:5px;height:14px;margin-right:10px}
.cattools .s{width:3px;height:22px;margin:0 7px 0 0;background-position:0 0;filter:brightness(.6)}
.cattools .c{width:11px;margin-left:0}
.cattools .a4{width:20px;margin-right:6px}
.cattools .c.dm{margin-right:8px}
.loc{height:32px;flex:none;display:flex;align-items:center;padding-left:2px;padding-right:5px;font-size:13.500px}
.loc>span{width:64px}
.loc .combo{flex:1;padding-left:3px}
.loc .combo svg{width:19px;height:16px;margin-right:4px}
.cattree{height:792px;margin:0 5px 0 0;border:2px solid #6f6f6f;border-right:1px solid #bbb;border-bottom:1px solid #bbb;display:flex;flex-direction:column;background:#ececec}
.treerow{display:flex;height:771px}
.tree{width:333px;background:#fff;overflow:hidden}
.n{height:20.390px;display:flex;align-items:center;font-size:14px}
.n svg{width:18px;height:16px;margin:0 5.500px 0 8px}
.n svg.m{height:19px}
.l0 svg{margin:0 6px 0 1px}
.l1{padding-left:4px}.l2{padding-left:27px}.l3{padding-left:50px}.l4{padding-left:72.500px}.l5{padding-left:106px}
.l5 svg{margin-right:4px}
.n.l5 span{padding:3px 2px}
.long{letter-spacing:-.26px}
.no{visibility:hidden}
.hl span{background:#f0f0f0}
.cv{height:771px}
.cv .up{margin-top:3px}
.cv .th{height:352px;margin-top:4px}
.chs{height:19px;padding-right:22px}
.chs .th{width:206px;margin-left:22px}

.status{height:24px;flex:none;display:flex;align-items:center;padding:3px 0 0 2000px;background:#f0f0f0}
.taskbar{height:49px;flex:none;border-top:1.500px solid #4a5a60;background:linear-gradient(90deg,#8795ab 0,#8795ab 60px,#a7c0de 120px,#a7c0de 2050px,#8394ab 2080px,#8394ab);display:flex;align-items:center}
.tk{width:72px;margin-right:2.500px;height:47px;display:flex;align-items:center;justify-content:center;flex:none}
.tk svg{width:37px;height:37px}
.st{width:66px;margin-right:5px}
.st svg{width:43px;height:43px}
.cur.tk{background:linear-gradient(90deg,#f2f5f9,#d3deea);border:1.500px solid #4c5866;border-radius:3px;box-shadow:inset 0 0 0 1px #fff}
.rtxt{font-family:"Liberation Serif",serif;font-weight:700;font-size:21px;fill:#fff;letter-spacing:0}
.tray{margin-left:auto;display:flex;align-items:center;gap:10px;color:#fff}
.tray svg{width:19px;height:19px}
.tray .up{width:9px;height:6px;margin-right:6px}
.clock{width:85px;margin-left:9px;display:flex;flex-direction:column;align-items:center;gap:6px;color:#fff;font-size:14.300px;padding-top:2px}
.desk{width:17px;height:48px;border:1.500px solid #9aa8b8;border-top-color:#333;background:linear-gradient(#7d8a99,#4d5a69 45%,#76869a);margin-right:1px}
```
